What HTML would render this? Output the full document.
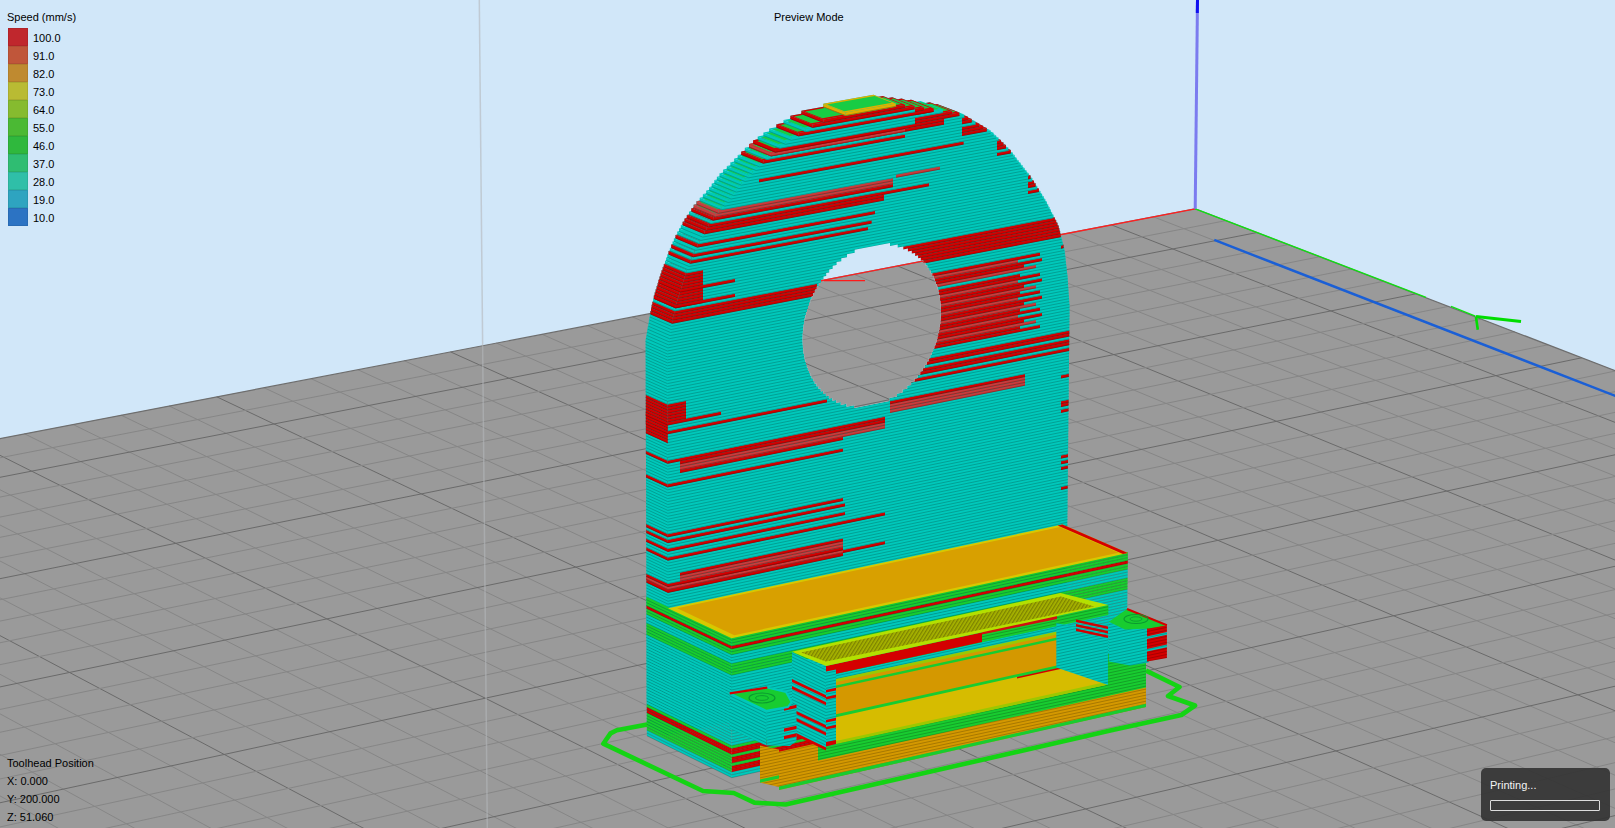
<!DOCTYPE html><html><head><meta charset="utf-8"><style>
html,body{margin:0;padding:0;width:1615px;height:828px;overflow:hidden;background:#d1e7f9}
.t{position:absolute;font-family:"Liberation Sans",sans-serif;font-size:11px;line-height:13px;color:#000;white-space:nowrap}
</style></head><body><svg width="1615" height="828" viewBox="0 0 1615 828" style="position:absolute;left:0;top:0"><defs><pattern id="ph" patternUnits="userSpaceOnUse" width="3.0" height="40" patternTransform="rotate(32)"><rect x="0" y="0" width="1.3" height="40" fill="rgba(70,70,0,0.45)"/></pattern><pattern id="pu" patternUnits="userSpaceOnUse" width="40" height="2.95" patternTransform="rotate(-12.1)"><rect x="0" y="2.0" width="40" height="0.95" fill="rgba(0,0,0,0.22)"/></pattern><pattern id="pv" patternUnits="userSpaceOnUse" width="40" height="2.95" patternTransform="rotate(25.6)"><rect x="0" y="2.0" width="40" height="0.95" fill="rgba(0,0,0,0.22)"/></pattern><clipPath id="hf"><polygon points="854.2,408.1 854.2,405.2 846.5,406.7 846.5,403.8 840.8,404.9 840.8,402.0 836.2,402.9 836.2,400.0 832.3,400.8 832.3,397.9 828.9,398.6 828.9,395.7 825.9,396.3 825.9,393.3 823.2,393.9 823.2,390.9 820.8,391.4 820.8,388.5 818.5,388.9 818.6,386.0 816.5,386.4 816.6,383.5 814.7,383.9 814.7,380.9 813.1,381.3 813.1,378.3 811.6,378.6 811.6,375.7 810.2,376.0 810.2,373.0 809.0,373.3 809.0,370.4 807.9,370.6 807.9,367.6 806.9,367.8 806.9,364.9 806.0,365.1 806.0,362.1 805.2,362.3 805.2,359.4 804.6,359.5 804.6,356.6 804.0,356.7 804.0,353.7 803.5,353.8 803.5,350.9 803.1,351.0 803.2,348.0 802.9,348.1 802.9,345.1 802.7,345.2 802.7,342.2 802.6,342.3 802.6,339.3 802.6,339.3 802.6,336.4 802.7,336.4 802.7,333.4 802.9,333.4 802.9,330.4 803.2,330.4 803.2,327.4 803.6,327.4 803.6,324.4 804.0,324.3 804.0,321.4 804.6,321.3 804.6,318.3 805.3,318.2 805.3,315.3 806.1,315.1 806.1,312.2 807.0,312.0 807.0,309.1 808.0,308.9 808.0,305.9 809.1,305.7 809.1,302.8 810.3,302.5 810.4,299.6 811.7,299.3 811.7,296.4 813.2,296.1 813.3,293.1 814.9,292.8 814.9,289.8 816.8,289.5 816.8,286.5 818.8,286.2 818.8,283.2 821.0,282.8 821.0,279.8 823.5,279.4 823.5,276.4 826.2,275.9 826.2,273.0 829.2,272.4 829.2,269.4 832.7,268.8 832.7,265.8 836.6,265.1 836.6,262.1 841.3,261.2 841.3,258.3 847.0,257.2 847.0,254.3 854.7,252.8 854.7,249.8 890.0,243.1 890.0,246.1 897.7,244.6 897.7,247.5 903.3,246.4 903.3,249.4 907.9,248.5 907.9,251.4 911.8,250.7 911.8,253.6 915.1,253.0 915.1,255.9 918.1,255.3 918.1,258.3 920.8,257.7 920.8,260.7 923.2,260.2 923.2,263.1 925.4,262.7 925.4,265.6 927.3,265.3 927.3,268.2 929.1,267.8 929.1,270.8 930.8,270.4 930.7,273.4 932.2,273.1 932.2,276.0 933.6,275.7 933.5,278.7 934.8,278.4 934.7,281.4 935.8,281.1 935.8,284.1 936.8,283.9 936.8,286.8 937.7,286.6 937.6,289.5 938.4,289.4 938.4,292.3 939.1,292.2 939.0,295.1 939.6,295.0 939.6,297.9 940.0,297.8 940.0,300.7 940.4,300.7 940.4,303.6 940.7,303.5 940.6,306.4 940.8,306.4 940.8,309.3 940.9,309.3 940.9,312.2 940.9,312.2 940.9,315.1 940.8,315.2 940.7,318.1 940.6,318.1 940.5,321.0 940.3,321.1 940.3,324.0 939.9,324.1 939.9,327.0 939.4,327.1 939.4,330.0 938.8,330.1 938.8,333.0 938.1,333.1 938.1,336.0 937.4,336.2 937.3,339.1 936.5,339.3 936.5,342.2 935.5,342.4 935.5,345.3 934.4,345.5 934.3,348.4 933.1,348.7 933.1,351.6 931.8,351.8 931.7,354.7 930.3,355.0 930.2,358.0 928.6,358.3 928.6,361.2 926.8,361.5 926.8,364.5 924.8,364.8 924.8,367.8 922.6,368.2 922.6,371.1 920.2,371.6 920.2,374.5 917.5,375.0 917.5,377.9 914.5,378.5 914.5,381.4 911.1,382.1 911.1,385.0 907.2,385.8 907.2,388.7 902.6,389.6 902.6,392.5 897.0,393.7 897.0,396.6 889.3,398.1 889.3,401.0"/></clipPath><clipPath id="hf0"><polygon points="802.6,339.3 802.8,333.6 803.3,327.8 804.2,322.1 805.4,316.3 807.0,310.6 808.8,305.0 811.0,299.4 813.5,294.1 816.3,288.8 819.4,283.8 822.7,278.9 826.3,274.3 830.1,270.0 834.1,265.9 838.3,262.1 842.7,258.7 847.2,255.6 851.9,252.8 856.6,250.4 861.4,248.4 866.3,246.8 871.2,245.5 876.1,244.7 880.9,244.3 885.7,244.3 890.5,244.6 895.1,245.4 899.7,246.6 904.1,248.2 908.3,250.2 912.3,252.5 916.2,255.2 919.8,258.3 923.2,261.7 926.3,265.4 929.2,269.4 931.7,273.6 934.0,278.2 936.0,282.9 937.6,287.9 938.9,293.1 939.9,298.4 940.6,303.9 940.9,309.4 940.8,315.1 940.4,320.7 939.7,326.5 938.7,332.2 937.3,337.8 935.6,343.4 933.6,349.0 931.3,354.4 928.6,359.6 925.7,364.7 922.6,369.7 919.2,374.3 915.5,378.8 911.7,383.0 907.6,386.9 903.4,390.5 899.0,393.8 894.4,396.7 889.8,399.3 885.0,401.5 880.2,403.4 875.4,404.9 870.5,406.0 865.7,406.6 860.8,406.9 856.1,406.8 851.3,406.3 846.7,405.3 842.3,404.0 837.9,402.3 833.7,400.2 829.8,397.7 826.0,394.9 822.4,391.7 819.1,388.2 816.1,384.3 813.3,380.2 810.9,375.8 808.7,371.2 806.8,366.3 805.3,361.2 804.1,355.9 803.3,350.5 802.8,345.0 802.6,339.3"/></clipPath><clipPath id="hb"><polygon points="780.6,329.9 780.8,324.2 781.3,318.5 782.2,312.8 783.4,307.0 784.9,301.3 786.8,295.7 789.0,290.2 791.5,284.8 794.3,279.6 797.3,274.6 800.6,269.7 804.2,265.1 808.0,260.8 812.0,256.7 816.2,253.0 820.6,249.6 825.1,246.5 829.7,243.7 834.4,241.3 839.3,239.3 844.1,237.7 849.0,236.5 853.9,235.7 858.7,235.2 863.5,235.2 868.3,235.6 872.9,236.4 877.5,237.6 881.8,239.2 886.1,241.1 890.1,243.5 894.0,246.2 897.6,249.2 901.0,252.6 904.1,256.3 906.9,260.3 909.5,264.5 911.8,269.1 913.7,273.8 915.4,278.8 916.7,283.9 917.7,289.2 918.3,294.7 918.6,300.2 918.6,305.8 918.2,311.5 917.5,317.2 916.5,322.9 915.1,328.6 913.4,334.2 911.4,339.7 909.1,345.1 906.5,350.3 903.6,355.4 900.4,360.3 897.0,364.9 893.4,369.4 889.5,373.6 885.5,377.4 881.2,381.0 876.9,384.3 872.3,387.2 867.7,389.8 863.0,392.0 858.2,393.9 853.3,395.4 848.5,396.4 843.6,397.1 838.8,397.4 834.0,397.3 829.3,396.7 824.7,395.8 820.2,394.5 815.9,392.8 811.7,390.7 807.8,388.2 804.0,385.4 800.4,382.2 797.1,378.7 794.1,374.9 791.3,370.7 788.9,366.4 786.7,361.7 784.9,356.8 783.3,351.8 782.1,346.5 781.3,341.1 780.8,335.6 780.6,329.9"/></clipPath></defs><g id="bg"><rect x="0" y="0" width="1615" height="828" fill="#d1e7f9"/><polygon points="-957.9,622.7 1195.2,208.8 2890.3,862.2 466.7,1513.5" fill="#9a9a9a"/><g stroke-width="1"><line x1="1153.43" y1="216.81" x2="2844.86" y2="874.38" stroke="#868686"/><line x1="1111.41" y1="224.89" x2="2799.09" y2="886.68" stroke="#6a6a6a"/><line x1="1069.15" y1="233.02" x2="2753.00" y2="899.07" stroke="#868686"/><line x1="1026.64" y1="241.19" x2="2706.57" y2="911.54" stroke="#868686"/><line x1="983.88" y1="249.41" x2="2659.81" y2="924.11" stroke="#868686"/><line x1="940.87" y1="257.68" x2="2612.71" y2="936.77" stroke="#868686"/><line x1="897.61" y1="265.99" x2="2565.27" y2="949.52" stroke="#6a6a6a"/><line x1="854.09" y1="274.36" x2="2517.48" y2="962.36" stroke="#868686"/><line x1="810.32" y1="282.78" x2="2469.34" y2="975.29" stroke="#868686"/><line x1="766.29" y1="291.24" x2="2420.85" y2="988.32" stroke="#868686"/><line x1="722.00" y1="299.76" x2="2372.01" y2="1001.45" stroke="#868686"/><line x1="677.44" y1="308.32" x2="2322.80" y2="1014.68" stroke="#6a6a6a"/><line x1="632.62" y1="316.94" x2="2273.23" y2="1028.00" stroke="#868686"/><line x1="587.53" y1="325.61" x2="2223.29" y2="1041.42" stroke="#868686"/><line x1="542.17" y1="334.33" x2="2172.98" y2="1054.94" stroke="#868686"/><line x1="496.54" y1="343.10" x2="2122.29" y2="1068.56" stroke="#868686"/><line x1="450.63" y1="351.93" x2="2071.21" y2="1082.29" stroke="#6a6a6a"/><line x1="404.44" y1="360.81" x2="2019.76" y2="1096.11" stroke="#868686"/><line x1="357.97" y1="369.74" x2="1967.91" y2="1110.05" stroke="#868686"/><line x1="311.22" y1="378.73" x2="1915.66" y2="1124.09" stroke="#868686"/><line x1="264.18" y1="387.77" x2="1863.02" y2="1138.24" stroke="#868686"/><line x1="216.85" y1="396.87" x2="1809.98" y2="1152.49" stroke="#6a6a6a"/><line x1="169.24" y1="406.03" x2="1756.52" y2="1166.86" stroke="#868686"/><line x1="121.32" y1="415.24" x2="1702.65" y2="1181.33" stroke="#868686"/><line x1="73.12" y1="424.50" x2="1648.37" y2="1195.92" stroke="#868686"/><line x1="24.61" y1="433.83" x2="1593.66" y2="1210.62" stroke="#868686"/><line x1="-24.20" y1="443.21" x2="1538.52" y2="1225.44" stroke="#6a6a6a"/><line x1="-73.32" y1="452.66" x2="1482.95" y2="1240.37" stroke="#868686"/><line x1="-122.74" y1="462.16" x2="1426.95" y2="1255.42" stroke="#868686"/><line x1="-172.47" y1="471.72" x2="1370.50" y2="1270.60" stroke="#868686"/><line x1="-222.52" y1="481.34" x2="1313.60" y2="1285.89" stroke="#868686"/><line x1="-272.88" y1="491.02" x2="1256.24" y2="1301.30" stroke="#6a6a6a"/><line x1="-323.57" y1="500.77" x2="1198.43" y2="1316.84" stroke="#868686"/><line x1="-374.58" y1="510.57" x2="1140.15" y2="1332.50" stroke="#868686"/><line x1="-425.91" y1="520.44" x2="1081.41" y2="1348.28" stroke="#868686"/><line x1="-477.57" y1="530.37" x2="1022.18" y2="1364.20" stroke="#868686"/><line x1="-529.56" y1="540.37" x2="962.48" y2="1380.25" stroke="#6a6a6a"/><line x1="-581.89" y1="550.43" x2="902.28" y2="1396.42" stroke="#868686"/><line x1="-634.56" y1="560.56" x2="841.59" y2="1412.73" stroke="#868686"/><line x1="-687.57" y1="570.75" x2="780.41" y2="1429.17" stroke="#868686"/><line x1="-740.93" y1="581.01" x2="718.71" y2="1445.75" stroke="#868686"/><line x1="-794.63" y1="591.33" x2="656.51" y2="1462.47" stroke="#6a6a6a"/><line x1="-848.69" y1="601.72" x2="593.78" y2="1479.33" stroke="#868686"/><line x1="-903.10" y1="612.18" x2="530.53" y2="1496.33" stroke="#868686"/><line x1="1225.94" y1="220.62" x2="-932.91" y2="638.32" stroke="#868686"/><line x1="1256.93" y1="232.57" x2="-907.72" y2="654.07" stroke="#6a6a6a"/><line x1="1288.18" y1="244.61" x2="-882.27" y2="669.98" stroke="#868686"/><line x1="1319.70" y1="256.76" x2="-856.58" y2="686.04" stroke="#868686"/><line x1="1351.48" y1="269.01" x2="-830.64" y2="702.26" stroke="#868686"/><line x1="1383.53" y1="281.37" x2="-804.44" y2="718.65" stroke="#868686"/><line x1="1415.86" y1="293.83" x2="-777.98" y2="735.19" stroke="#6a6a6a"/><line x1="1448.47" y1="306.40" x2="-751.26" y2="751.90" stroke="#868686"/><line x1="1481.36" y1="319.08" x2="-724.27" y2="768.77" stroke="#868686"/><line x1="1514.54" y1="331.87" x2="-697.01" y2="785.82" stroke="#868686"/><line x1="1548.01" y1="344.77" x2="-669.48" y2="803.03" stroke="#868686"/><line x1="1581.77" y1="357.78" x2="-641.66" y2="820.43" stroke="#6a6a6a"/><line x1="1615.83" y1="370.91" x2="-613.56" y2="838.00" stroke="#868686"/><line x1="1650.19" y1="384.15" x2="-585.17" y2="855.75" stroke="#868686"/><line x1="1684.86" y1="397.52" x2="-556.49" y2="873.68" stroke="#868686"/><line x1="1719.84" y1="411.00" x2="-527.51" y2="891.80" stroke="#868686"/><line x1="1755.13" y1="424.60" x2="-498.23" y2="910.11" stroke="#6a6a6a"/><line x1="1790.73" y1="438.33" x2="-468.64" y2="928.61" stroke="#868686"/><line x1="1826.66" y1="452.18" x2="-438.74" y2="947.30" stroke="#868686"/><line x1="1862.92" y1="466.15" x2="-408.53" y2="966.19" stroke="#868686"/><line x1="1899.51" y1="480.26" x2="-377.99" y2="985.29" stroke="#868686"/><line x1="1936.44" y1="494.49" x2="-347.13" y2="1004.59" stroke="#6a6a6a"/><line x1="1973.70" y1="508.85" x2="-315.93" y2="1024.09" stroke="#868686"/><line x1="2011.31" y1="523.35" x2="-284.40" y2="1043.81" stroke="#868686"/><line x1="2049.27" y1="537.98" x2="-252.52" y2="1063.74" stroke="#868686"/><line x1="2087.59" y1="552.75" x2="-220.29" y2="1083.89" stroke="#868686"/><line x1="2126.26" y1="567.66" x2="-187.71" y2="1104.26" stroke="#6a6a6a"/><line x1="2165.30" y1="582.71" x2="-154.77" y2="1124.86" stroke="#868686"/><line x1="2204.72" y1="597.90" x2="-121.46" y2="1145.68" stroke="#868686"/><line x1="2244.50" y1="613.24" x2="-87.78" y2="1166.74" stroke="#868686"/><line x1="2284.67" y1="628.72" x2="-53.73" y2="1188.04" stroke="#868686"/><line x1="2325.22" y1="644.35" x2="-19.28" y2="1209.57" stroke="#6a6a6a"/><line x1="2366.17" y1="660.13" x2="15.55" y2="1231.36" stroke="#868686"/><line x1="2407.51" y1="676.07" x2="50.79" y2="1253.39" stroke="#868686"/><line x1="2449.26" y1="692.16" x2="86.43" y2="1275.67" stroke="#868686"/><line x1="2491.42" y1="708.41" x2="122.48" y2="1298.21" stroke="#868686"/><line x1="2533.99" y1="724.82" x2="158.95" y2="1321.01" stroke="#6a6a6a"/><line x1="2576.99" y1="741.39" x2="195.85" y2="1344.09" stroke="#868686"/><line x1="2620.41" y1="758.13" x2="233.18" y2="1367.43" stroke="#868686"/><line x1="2664.27" y1="775.04" x2="270.96" y2="1391.05" stroke="#868686"/><line x1="2708.57" y1="792.11" x2="309.18" y2="1414.95" stroke="#868686"/><line x1="2753.31" y1="809.36" x2="347.86" y2="1439.13" stroke="#6a6a6a"/><line x1="2798.51" y1="826.78" x2="387.01" y2="1463.61" stroke="#868686"/><line x1="2844.18" y1="844.38" x2="426.64" y2="1488.39" stroke="#868686"/></g><line x1="-957.87" y1="622.71" x2="1195.21" y2="208.78" stroke="#6e6e6e" stroke-width="1.2"/><line x1="1195.21" y1="208.78" x2="2890.31" y2="862.17" stroke="#6e6e6e" stroke-width="1.2"/><line x1="677.44" y1="308.32" x2="1195.21" y2="208.78" stroke="#ff2020" stroke-width="1.3"/><polyline points="1195.2,208.8 1426,297.3" fill="none" stroke="#10e010" stroke-width="1.3"/><polyline points="1451,306.4 1475.4,316.2" fill="none" stroke="#10e010" stroke-width="1.3"/><polyline points="1476,316.5 1521,321.6" fill="none" stroke="#00dd00" stroke-width="3"/><polyline points="1476,317 1477.8,329.8" fill="none" stroke="#00dd00" stroke-width="2.6"/><line x1="1214.27" y1="239.97" x2="2201.08" y2="623.54" stroke="#1a5fd6" stroke-width="2.4"/><line x1="824" y1="280.6" x2="865" y2="280.6" stroke="#ff1a1a" stroke-width="1.3"/></g><line x1="479.3" y1="0" x2="487.3" y2="828" stroke="#b4b8bb" stroke-opacity="0.6" stroke-width="1.5"/><line x1="1197.5" y1="0" x2="1195.2" y2="208.8" stroke="#7b7bef" stroke-width="3"/><line x1="1197.5" y1="0" x2="1197.3" y2="13" stroke="#1010f0" stroke-width="3"/><g stroke="none"><g fill="#00c8bb"><polygon points="668.3,734.9 1066.1,647.2 1066.1,644.4 668.3,732.0"/><polygon points="646.8,724.3 668.3,734.9 668.3,732.0 646.8,721.4"/><polygon points="646.8,721.4 1043.9,634.3 1066.1,644.4 668.3,732.0"/></g><polyline fill="none" stroke="#009c90" stroke-width="0.9" points="646.8,724.3 668.3,734.9 1066.1,647.2"/><g fill="#00c8bb"><polygon points="668.3,732.0 1066.1,644.4 1066.1,641.5 668.3,729.1"/><polygon points="646.8,721.4 668.3,732.0 668.3,729.1 646.8,718.5"/><polygon points="646.8,718.5 1043.9,631.5 1066.1,641.5 668.3,729.1"/></g><polyline fill="none" stroke="#009c90" stroke-width="0.9" points="646.8,721.4 668.3,732.0 1066.1,644.4"/><g fill="#00c8bb"><polygon points="668.3,729.1 1066.1,641.5 1066.1,638.7 668.3,726.2"/><polygon points="646.8,718.5 668.3,729.1 668.3,726.2 646.8,715.6"/><polygon points="646.8,715.6 1044.0,628.7 1066.1,638.7 668.3,726.2"/></g><polyline fill="none" stroke="#009c90" stroke-width="0.9" points="646.8,718.5 668.3,729.1 1066.1,641.5"/><g fill="#00c8bb"><polygon points="668.3,726.2 1066.1,638.7 1066.2,635.9 668.3,723.3"/><polygon points="646.8,715.6 668.3,726.2 668.3,723.3 646.8,712.7"/><polygon points="646.8,712.7 1044.0,625.9 1066.2,635.9 668.3,723.3"/></g><polyline fill="none" stroke="#009c90" stroke-width="0.9" points="646.8,715.6 668.3,726.2 1066.1,638.7"/><g fill="#00c8bb"><polygon points="668.3,723.3 1066.2,635.9 1066.2,633.0 668.3,720.4"/><polygon points="646.8,712.7 668.3,723.3 668.3,720.4 646.8,709.9"/><polygon points="646.8,709.9 1044.0,623.0 1066.2,633.0 668.3,720.4"/></g><polyline fill="none" stroke="#009c90" stroke-width="0.9" points="646.8,712.7 668.3,723.3 1066.2,635.9"/><g fill="#00c8bb"><polygon points="668.3,720.4 1066.2,633.0 1066.2,630.2 668.3,717.5"/><polygon points="646.8,709.9 668.3,720.4 668.3,717.5 646.8,707.0"/><polygon points="646.8,707.0 1044.0,620.2 1066.2,630.2 668.3,717.5"/></g><polyline fill="none" stroke="#009c90" stroke-width="0.9" points="646.8,709.9 668.3,720.4 1066.2,633.0"/><g fill="#00c8bb"><polygon points="668.3,717.5 1066.2,630.2 1066.3,627.4 668.3,714.6"/><polygon points="646.8,707.0 668.3,717.5 668.3,714.6 646.8,704.1"/><polygon points="646.8,704.1 1044.1,617.4 1066.3,627.4 668.3,714.6"/></g><polyline fill="none" stroke="#009c90" stroke-width="0.9" points="646.8,707.0 668.3,717.5 1066.2,630.2"/><g fill="#00c8bb"><polygon points="668.3,714.6 1066.3,627.4 1066.3,624.6 668.3,711.7"/><polygon points="646.8,704.1 668.3,714.6 668.3,711.7 646.8,701.2"/><polygon points="646.8,701.2 1044.1,614.6 1066.3,624.6 668.3,711.7"/></g><polyline fill="none" stroke="#009c90" stroke-width="0.9" points="646.8,704.1 668.3,714.6 1066.3,627.4"/><g fill="#00c8bb"><polygon points="668.3,711.7 1066.3,624.6 1066.3,621.7 668.3,708.8"/><polygon points="646.8,701.2 668.3,711.7 668.3,708.8 646.7,698.3"/><polygon points="646.7,698.3 1044.1,611.8 1066.3,621.7 668.3,708.8"/></g><polyline fill="none" stroke="#009c90" stroke-width="0.9" points="646.8,701.2 668.3,711.7 1066.3,624.6"/><g fill="#00c8bb"><polygon points="668.3,708.8 1066.3,621.7 1066.3,618.9 668.3,705.9"/><polygon points="646.7,698.3 668.3,708.8 668.3,705.9 646.7,695.4"/><polygon points="646.7,695.4 1044.2,608.9 1066.3,618.9 668.3,705.9"/></g><polyline fill="none" stroke="#009c90" stroke-width="0.9" points="646.7,698.3 668.3,708.8 1066.3,621.7"/><g fill="#00c8bb"><polygon points="668.3,705.9 1066.3,618.9 1066.4,616.1 668.3,703.0"/><polygon points="646.7,695.4 668.3,705.9 668.3,703.0 646.7,692.5"/><polygon points="646.7,692.5 1044.2,606.1 1066.4,616.1 668.3,703.0"/></g><polyline fill="none" stroke="#009c90" stroke-width="0.9" points="646.7,695.4 668.3,705.9 1066.3,618.9"/><g fill="#00c8bb"><polygon points="668.3,703.0 1066.4,616.1 1066.4,613.2 668.3,700.1"/><polygon points="646.7,692.5 668.3,703.0 668.3,700.1 646.7,689.6"/><polygon points="646.7,689.6 1044.2,603.3 1066.4,613.2 668.3,700.1"/></g><polyline fill="none" stroke="#009c90" stroke-width="0.9" points="646.7,692.5 668.3,703.0 1066.4,616.1"/><g fill="#00c8bb"><polygon points="668.3,700.1 1066.4,613.2 1066.4,610.4 668.2,697.2"/><polygon points="646.7,689.6 668.3,700.1 668.2,697.2 646.7,686.7"/><polygon points="646.7,686.7 1044.2,600.5 1066.4,610.4 668.2,697.2"/></g><polyline fill="none" stroke="#009c90" stroke-width="0.9" points="646.7,689.6 668.3,700.1 1066.4,613.2"/><g fill="#00c8bb"><polygon points="668.2,697.2 1066.4,610.4 1066.5,607.6 668.2,694.3"/><polygon points="646.7,686.7 668.2,697.2 668.2,694.3 646.7,683.8"/><polygon points="646.7,683.8 1044.3,597.6 1066.5,607.6 668.2,694.3"/></g><polyline fill="none" stroke="#009c90" stroke-width="0.9" points="646.7,686.7 668.2,697.2 1066.4,610.4"/><g fill="#00c8bb"><polygon points="668.2,694.3 1066.5,607.6 1066.5,604.7 668.2,691.4"/><polygon points="646.7,683.8 668.2,694.3 668.2,691.4 646.7,680.9"/><polygon points="646.7,680.9 1044.3,594.8 1066.5,604.7 668.2,691.4"/></g><polyline fill="none" stroke="#009c90" stroke-width="0.9" points="646.7,683.8 668.2,694.3 1066.5,607.6"/><g fill="#00c8bb"><polygon points="668.2,691.4 1066.5,604.7 1066.5,601.9 668.2,688.5"/><polygon points="646.7,680.9 668.2,691.4 668.2,688.5 646.7,678.0"/><polygon points="646.7,678.0 1044.3,592.0 1066.5,601.9 668.2,688.5"/></g><polyline fill="none" stroke="#009c90" stroke-width="0.9" points="646.7,680.9 668.2,691.4 1066.5,604.7"/><g fill="#00c8bb"><polygon points="668.2,688.5 1066.5,601.9 1066.5,599.1 668.2,685.6"/><polygon points="646.7,678.0 668.2,688.5 668.2,685.6 646.7,675.1"/><polygon points="646.7,675.1 1044.3,589.2 1066.5,599.1 668.2,685.6"/></g><polyline fill="none" stroke="#009c90" stroke-width="0.9" points="646.7,678.0 668.2,688.5 1066.5,601.9"/><g fill="#00c8bb"><polygon points="668.2,685.6 1066.5,599.1 1066.6,596.2 668.2,682.7"/><polygon points="646.7,675.1 668.2,685.6 668.2,682.7 646.7,672.2"/><polygon points="646.7,672.2 1044.4,586.3 1066.6,596.2 668.2,682.7"/></g><polyline fill="none" stroke="#009c90" stroke-width="0.9" points="646.7,675.1 668.2,685.6 1066.5,599.1"/><g fill="#00c8bb"><polygon points="668.2,682.7 1066.6,596.2 1066.6,593.4 668.2,679.8"/><polygon points="646.7,672.2 668.2,682.7 668.2,679.8 646.7,669.4"/><polygon points="646.7,669.4 1044.4,583.5 1066.6,593.4 668.2,679.8"/></g><polyline fill="none" stroke="#009c90" stroke-width="0.9" points="646.7,672.2 668.2,682.7 1066.6,596.2"/><g fill="#00c8bb"><polygon points="668.2,679.8 1066.6,593.4 1066.6,590.6 668.2,676.9"/><polygon points="646.7,669.4 668.2,679.8 668.2,676.9 646.6,666.5"/><polygon points="646.6,666.5 1044.4,580.7 1066.6,590.6 668.2,676.9"/></g><polyline fill="none" stroke="#009c90" stroke-width="0.9" points="646.7,669.4 668.2,679.8 1066.6,593.4"/><g fill="#00c8bb"><polygon points="668.2,676.9 1066.6,590.6 1066.7,587.7 668.2,674.0"/><polygon points="646.6,666.5 668.2,676.9 668.2,674.0 646.6,663.6"/><polygon points="646.6,663.6 1044.4,577.8 1066.7,587.7 668.2,674.0"/></g><polyline fill="none" stroke="#009c90" stroke-width="0.9" points="646.6,666.5 668.2,676.9 1066.6,590.6"/><g fill="#00c8bb"><polygon points="668.2,674.0 1066.7,587.7 1066.7,584.9 668.2,671.1"/><polygon points="646.6,663.6 668.2,674.0 668.2,671.1 646.6,660.7"/><polygon points="646.6,660.7 1044.5,575.0 1066.7,584.9 668.2,671.1"/></g><polyline fill="none" stroke="#009c90" stroke-width="0.9" points="646.6,663.6 668.2,674.0 1066.7,587.7"/><g fill="#00c8bb"><polygon points="668.2,671.1 1066.7,584.9 1066.7,582.1 668.2,668.2"/><polygon points="646.6,660.7 668.2,671.1 668.2,668.2 646.6,657.8"/><polygon points="646.6,657.8 1044.5,572.2 1066.7,582.1 668.2,668.2"/></g><polyline fill="none" stroke="#009c90" stroke-width="0.9" points="646.6,660.7 668.2,671.1 1066.7,584.9"/><g fill="#00c8bb"><polygon points="668.2,668.2 1066.7,582.1 1066.8,579.2 668.2,665.3"/><polygon points="646.6,657.8 668.2,668.2 668.2,665.3 646.6,654.9"/><polygon points="646.6,654.9 1044.5,569.4 1066.8,579.2 668.2,665.3"/></g><polyline fill="none" stroke="#009c90" stroke-width="0.9" points="646.6,657.8 668.2,668.2 1066.7,582.1"/><g fill="#00c8bb"><polygon points="668.2,665.3 1066.8,579.2 1066.8,576.4 668.2,662.4"/><polygon points="646.6,654.9 668.2,665.3 668.2,662.4 646.6,652.0"/><polygon points="646.6,652.0 1044.6,566.5 1066.8,576.4 668.2,662.4"/></g><polyline fill="none" stroke="#009c90" stroke-width="0.9" points="646.6,654.9 668.2,665.3 1066.8,579.2"/><g fill="#00c8bb"><polygon points="668.2,662.4 1066.8,576.4 1066.8,573.5 668.2,659.4"/><polygon points="646.6,652.0 668.2,662.4 668.2,659.4 646.6,649.1"/><polygon points="646.6,649.1 1044.6,563.7 1066.8,573.5 668.2,659.4"/></g><polyline fill="none" stroke="#009c90" stroke-width="0.9" points="646.6,652.0 668.2,662.4 1066.8,576.4"/><g fill="#00c8bb"><polygon points="668.2,659.4 1066.8,573.5 1066.8,570.7 668.1,656.5"/><polygon points="646.6,649.1 668.2,659.4 668.1,656.5 646.6,646.2"/><polygon points="646.6,646.2 1044.6,560.9 1066.8,570.7 668.1,656.5"/></g><polyline fill="none" stroke="#009c90" stroke-width="0.9" points="646.6,649.1 668.2,659.4 1066.8,573.5"/><g fill="#00c8bb"><polygon points="668.1,656.5 1066.8,570.7 1066.9,567.9 668.1,653.6"/><polygon points="646.6,646.2 668.1,656.5 668.1,653.6 646.6,643.3"/><polygon points="646.6,643.3 1044.6,558.0 1066.9,567.9 668.1,653.6"/></g><polyline fill="none" stroke="#009c90" stroke-width="0.9" points="646.6,646.2 668.1,656.5 1066.8,570.7"/><g fill="#00c8bb"><polygon points="668.1,653.6 1066.9,567.9 1066.9,565.0 668.1,650.7"/><polygon points="646.6,643.3 668.1,653.6 668.1,650.7 646.6,640.4"/><polygon points="646.6,640.4 1044.7,555.2 1066.9,565.0 668.1,650.7"/></g><polyline fill="none" stroke="#009c90" stroke-width="0.9" points="646.6,643.3 668.1,653.6 1066.9,567.9"/><g fill="#00c8bb"><polygon points="668.1,650.7 1066.9,565.0 1066.9,562.2 668.1,647.8"/><polygon points="646.6,640.4 668.1,650.7 668.1,647.8 646.5,637.5"/><polygon points="646.5,637.5 1044.7,552.4 1066.9,562.2 668.1,647.8"/></g><polyline fill="none" stroke="#009c90" stroke-width="0.9" points="646.6,640.4 668.1,650.7 1066.9,565.0"/><g fill="#00c8bb"><polygon points="668.1,647.8 1066.9,562.2 1067.0,559.3 668.1,644.9"/><polygon points="646.5,637.5 668.1,647.8 668.1,644.9 646.5,634.6"/><polygon points="646.5,634.6 1044.7,549.5 1067.0,559.3 668.1,644.9"/></g><polyline fill="none" stroke="#009c90" stroke-width="0.9" points="646.5,637.5 668.1,647.8 1066.9,562.2"/><g fill="#00c8bb"><polygon points="668.1,644.9 1067.0,559.3 1067.0,556.5 668.1,642.0"/><polygon points="646.5,634.6 668.1,644.9 668.1,642.0 646.5,631.6"/><polygon points="646.5,631.6 1044.7,546.7 1067.0,556.5 668.1,642.0"/></g><polyline fill="none" stroke="#009c90" stroke-width="0.9" points="646.5,634.6 668.1,644.9 1067.0,559.3"/><g fill="#00c8bb"><polygon points="668.1,642.0 1067.0,556.5 1067.0,553.6 668.1,639.1"/><polygon points="646.5,631.6 668.1,642.0 668.1,639.1 646.5,628.7"/><polygon points="646.5,628.7 1044.8,543.9 1067.0,553.6 668.1,639.1"/></g><polyline fill="none" stroke="#009c90" stroke-width="0.9" points="646.5,631.6 668.1,642.0 1067.0,556.5"/><g fill="#00c8bb"><polygon points="668.1,639.1 1067.0,553.6 1067.0,550.8 668.1,636.2"/><polygon points="646.5,628.7 668.1,639.1 668.1,636.2 646.5,625.8"/><polygon points="646.5,625.8 1044.8,541.0 1067.0,550.8 668.1,636.2"/></g><polyline fill="none" stroke="#009c90" stroke-width="0.9" points="646.5,628.7 668.1,639.1 1067.0,553.6"/><g fill="#00c8bb"><polygon points="668.1,636.2 1067.0,550.8 1067.1,548.0 668.1,633.2"/><polygon points="646.5,625.8 668.1,636.2 668.1,633.2 646.5,622.9"/><polygon points="646.5,622.9 1044.8,538.2 1067.1,548.0 668.1,633.2"/></g><polyline fill="none" stroke="#009c90" stroke-width="0.9" points="646.5,625.8 668.1,636.2 1067.0,550.8"/><g fill="#00c8bb"><polygon points="668.1,633.2 1067.1,548.0 1067.1,545.1 668.1,630.3"/><polygon points="646.5,622.9 668.1,633.2 668.1,630.3 646.5,620.0"/><polygon points="646.5,620.0 1044.9,535.3 1067.1,545.1 668.1,630.3"/></g><polyline fill="none" stroke="#009c90" stroke-width="0.9" points="646.5,622.9 668.1,633.2 1067.1,548.0"/><g fill="#00c8bb"><polygon points="668.1,630.3 1067.1,545.1 1067.1,542.3 668.1,627.4"/><polygon points="646.5,620.0 668.1,630.3 668.1,627.4 646.5,617.1"/><polygon points="646.5,617.1 1044.9,532.5 1067.1,542.3 668.1,627.4"/></g><polyline fill="none" stroke="#009c90" stroke-width="0.9" points="646.5,620.0 668.1,630.3 1067.1,545.1"/><g fill="#00c8bb"><polygon points="668.1,627.4 1067.1,542.3 1067.2,539.4 668.1,624.5"/><polygon points="646.5,617.1 668.1,627.4 668.1,624.5 646.5,614.2"/><polygon points="646.5,614.2 1044.9,529.7 1067.2,539.4 668.1,624.5"/></g><polyline fill="none" stroke="#009c90" stroke-width="0.9" points="646.5,617.1 668.1,627.4 1067.1,542.3"/><g fill="#00c8bb"><polygon points="668.1,624.5 1067.2,539.4 1067.2,536.6 668.1,621.6"/><polygon points="646.5,614.2 668.1,624.5 668.1,621.6 646.5,611.3"/><polygon points="646.5,611.3 1044.9,526.8 1067.2,536.6 668.1,621.6"/></g><polyline fill="none" stroke="#009c90" stroke-width="0.9" points="646.5,614.2 668.1,624.5 1067.2,539.4"/><g fill="#00c8bb"><polygon points="668.1,621.6 1067.2,536.6 1067.2,533.7 668.0,618.7"/><polygon points="646.5,611.3 668.1,621.6 668.0,618.7 646.5,608.4"/><polygon points="646.5,608.4 1045.0,524.0 1067.2,533.7 668.0,618.7"/></g><polyline fill="none" stroke="#009c90" stroke-width="0.9" points="646.5,611.3 668.1,621.6 1067.2,536.6"/><g fill="#00c8bb"><polygon points="668.0,618.7 1067.2,533.7 1067.2,530.9 668.0,615.8"/><polygon points="646.5,608.4 668.0,618.7 668.0,615.8 646.4,605.5"/><polygon points="646.4,605.5 1045.0,521.2 1067.2,530.9 668.0,615.8"/></g><polyline fill="none" stroke="#009c90" stroke-width="0.9" points="646.5,608.4 668.0,618.7 1067.2,533.7"/><g fill="#00c8bb"><polygon points="668.0,615.8 1067.2,530.9 1067.3,528.0 668.0,612.8"/><polygon points="646.4,605.5 668.0,615.8 668.0,612.8 646.4,602.6"/><polygon points="646.4,602.6 1045.0,518.3 1067.3,528.0 668.0,612.8"/></g><polyline fill="none" stroke="#009c90" stroke-width="0.9" points="646.4,605.5 668.0,615.8 1067.2,530.9"/><g fill="#00c8bb"><polygon points="668.0,612.8 1067.3,528.0 1067.3,525.2 668.0,609.9"/><polygon points="646.4,602.6 668.0,612.8 668.0,609.9 646.4,599.7"/><polygon points="646.4,599.7 1045.0,515.5 1067.3,525.2 668.0,609.9"/></g><polyline fill="none" stroke="#009c90" stroke-width="0.9" points="646.4,602.6 668.0,612.8 1067.3,528.0"/><g fill="#00c8bb"><polygon points="668.0,609.9 1067.3,525.2 1067.3,522.3 668.0,607.0"/><polygon points="646.4,599.7 668.0,609.9 668.0,607.0 646.4,596.8"/><polygon points="646.4,596.8 1045.1,512.6 1067.3,522.3 668.0,607.0"/></g><polyline fill="none" stroke="#009c90" stroke-width="0.9" points="646.4,599.7 668.0,609.9 1067.3,525.2"/><g fill="#00c8bb"><polygon points="668.0,607.0 1067.3,522.3 1067.4,519.5 668.0,604.1"/><polygon points="646.4,596.8 668.0,607.0 668.0,604.1 646.4,593.9"/><polygon points="646.4,593.9 1045.1,509.8 1067.4,519.5 668.0,604.1"/></g><polyline fill="none" stroke="#009c90" stroke-width="0.9" points="646.4,596.8 668.0,607.0 1067.3,522.3"/><g fill="#00c8bb"><polygon points="668.0,604.1 1067.4,519.5 1067.4,516.6 668.0,601.2"/><polygon points="646.4,593.9 668.0,604.1 668.0,601.2 646.4,590.9"/><polygon points="646.4,590.9 1045.1,507.0 1067.4,516.6 668.0,601.2"/></g><polyline fill="none" stroke="#009c90" stroke-width="0.9" points="646.4,593.9 668.0,604.1 1067.4,519.5"/><g fill="#00c8bb"><polygon points="668.0,601.2 1067.4,516.6 1067.4,513.8 668.0,598.2"/><polygon points="646.4,590.9 668.0,601.2 668.0,598.2 646.4,588.0"/><polygon points="646.4,588.0 1045.2,504.1 1067.4,513.8 668.0,598.2"/></g><polyline fill="none" stroke="#009c90" stroke-width="0.9" points="646.4,590.9 668.0,601.2 1067.4,516.6"/><g fill="#00c8bb"><polygon points="668.0,598.2 1067.4,513.8 1067.5,510.9 668.0,595.3"/><polygon points="646.4,588.0 668.0,598.2 668.0,595.3 646.4,585.1"/><polygon points="646.4,585.1 1045.2,501.3 1067.5,510.9 668.0,595.3"/></g><polyline fill="none" stroke="#009c90" stroke-width="0.9" points="646.4,588.0 668.0,598.2 1067.4,513.8"/><g fill="#00c8bb"><polygon points="668.0,595.3 1067.5,510.9 1067.5,508.1 668.0,592.4"/><polygon points="646.4,585.1 668.0,595.3 668.0,592.4 646.4,582.2"/><polygon points="646.4,582.2 1045.2,498.4 1067.5,508.1 668.0,592.4"/></g><polyline fill="none" stroke="#009c90" stroke-width="0.9" points="646.4,585.1 668.0,595.3 1067.5,510.9"/><g fill="#00c8bb"><polygon points="668.0,592.4 1067.5,508.1 1067.5,505.2 668.0,589.5"/><polygon points="646.4,582.2 668.0,592.4 668.0,589.5 646.4,579.3"/><polygon points="646.4,579.3 1045.2,495.6 1067.5,505.2 668.0,589.5"/></g><polyline fill="none" stroke="#009c90" stroke-width="0.9" points="646.4,582.2 668.0,592.4 1067.5,508.1"/><g fill="#d40000"><polygon points="668.0,592.4 843.0,555.5 843.0,552.6 668.0,589.5"/><polygon points="646.4,582.2 668.0,592.4 668.0,589.5 646.4,579.3"/><polygon points="646.4,579.3 821.1,542.6 843.0,552.6 668.0,589.5"/></g><polyline fill="none" stroke="#a00000" stroke-width="0.9" points="646.4,582.2 668.0,592.4 843.0,555.5"/><g fill="#00c8bb"><polygon points="668.0,589.5 1067.5,505.2 1067.5,502.4 668.0,586.6"/><polygon points="646.4,579.3 668.0,589.5 668.0,586.6 646.3,576.4"/><polygon points="646.3,576.4 1045.3,492.7 1067.5,502.4 668.0,586.6"/></g><polyline fill="none" stroke="#009c90" stroke-width="0.9" points="646.4,579.3 668.0,589.5 1067.5,505.2"/><g fill="#d40000"><polygon points="668.0,589.5 885.0,543.7 885.0,540.8 668.0,586.6"/><polygon points="646.4,579.3 668.0,589.5 668.0,586.6 646.3,576.4"/><polygon points="646.3,576.4 863.0,530.9 885.0,540.8 668.0,586.6"/></g><polyline fill="none" stroke="#a00000" stroke-width="0.9" points="646.4,579.3 668.0,589.5 885.0,543.7"/><g fill="#c83c3c"><polygon points="668.0,589.5 843.0,552.6 843.0,549.7 668.0,586.6"/><polygon points="646.4,579.3 668.0,589.5 668.0,586.6 646.3,576.4"/><polygon points="646.3,576.4 821.1,539.7 843.0,549.7 668.0,586.6"/></g><polyline fill="none" stroke="#a02020" stroke-width="0.9" points="646.4,579.3 668.0,589.5 843.0,552.6"/><g fill="#00c8bb"><polygon points="668.0,586.6 1067.5,502.4 1067.6,499.5 668.0,583.6"/><polygon points="646.3,576.4 668.0,586.6 668.0,583.6 646.3,573.5"/><polygon points="646.3,573.5 1045.3,489.9 1067.6,499.5 668.0,583.6"/></g><polyline fill="none" stroke="#009c90" stroke-width="0.9" points="646.3,576.4 668.0,586.6 1067.5,502.4"/><g fill="#d40000"><polygon points="680.0,584.0 843.0,549.7 843.0,546.8 680.0,581.1"/><polygon points="658.4,570.9 821.1,536.9 843.0,546.8 680.0,581.1"/></g><polyline fill="none" stroke="#a00000" stroke-width="0.9" points="680.0,584.0 843.0,549.7"/><g fill="#d40000"><polygon points="668.0,586.6 843.0,549.7 843.0,546.8 668.0,583.6"/><polygon points="646.3,576.4 668.0,586.6 668.0,583.6 646.3,573.5"/><polygon points="646.3,573.5 821.1,536.9 843.0,546.8 668.0,583.6"/></g><polyline fill="none" stroke="#a00000" stroke-width="0.9" points="646.3,576.4 668.0,586.6 843.0,549.7"/><g fill="#00c8bb"><polygon points="668.0,583.6 1067.6,499.5 1067.6,496.7 667.9,580.7"/><polygon points="646.3,573.5 668.0,583.6 667.9,580.7 646.3,570.5"/><polygon points="646.3,570.5 1045.3,487.0 1067.6,496.7 667.9,580.7"/></g><polyline fill="none" stroke="#009c90" stroke-width="0.9" points="646.3,573.5 668.0,583.6 1067.6,499.5"/><g fill="#c83c3c"><polygon points="680.0,581.1 843.0,546.8 843.0,543.9 680.0,578.2"/><polygon points="658.4,568.0 821.1,534.0 843.0,543.9 680.0,578.2"/></g><polyline fill="none" stroke="#a02020" stroke-width="0.9" points="680.0,581.1 843.0,546.8"/><g fill="#00c8bb"><polygon points="667.9,580.7 1067.6,496.7 1067.6,493.8 667.9,577.8"/><polygon points="646.3,570.5 667.9,580.7 667.9,577.8 646.3,567.6"/><polygon points="646.3,567.6 1045.3,484.2 1067.6,493.8 667.9,577.8"/></g><polyline fill="none" stroke="#009c90" stroke-width="0.9" points="646.3,570.5 667.9,580.7 1067.6,496.7"/><g fill="#c83c3c"><polygon points="680.0,578.2 843.0,543.9 843.0,541.0 680.0,575.3"/><polygon points="658.4,565.1 821.1,531.1 843.0,541.0 680.0,575.3"/></g><polyline fill="none" stroke="#a02020" stroke-width="0.9" points="680.0,578.2 843.0,543.9"/><g fill="#00c8bb"><polygon points="667.9,577.8 1067.6,493.8 1067.7,491.0 667.9,574.9"/><polygon points="646.3,567.6 667.9,577.8 667.9,574.9 646.3,564.7"/><polygon points="646.3,564.7 1045.4,481.4 1067.7,491.0 667.9,574.9"/></g><polyline fill="none" stroke="#009c90" stroke-width="0.9" points="646.3,567.6 667.9,577.8 1067.6,493.8"/><g fill="#d40000"><polygon points="680.0,575.3 843.0,541.0 843.0,538.1 680.0,572.3"/><polygon points="658.4,562.2 821.1,528.2 843.0,538.1 680.0,572.3"/></g><polyline fill="none" stroke="#a00000" stroke-width="0.9" points="680.0,575.3 843.0,541.0"/><g fill="#00c8bb"><polygon points="667.9,574.9 1067.7,491.0 1067.7,488.1 667.9,571.9"/><polygon points="646.3,564.7 667.9,574.9 667.9,571.9 646.3,561.8"/><polygon points="646.3,561.8 1045.4,478.5 1067.7,488.1 667.9,571.9"/></g><polyline fill="none" stroke="#009c90" stroke-width="0.9" points="646.3,564.7 667.9,574.9 1067.7,491.0"/><g fill="#00c8bb"><polygon points="667.9,571.9 1067.7,488.1 1067.7,485.3 667.9,569.0"/><polygon points="646.3,561.8 667.9,571.9 667.9,569.0 646.3,558.9"/><polygon points="646.3,558.9 1045.4,475.7 1067.7,485.3 667.9,569.0"/></g><polyline fill="none" stroke="#009c90" stroke-width="0.9" points="646.3,561.8 667.9,571.9 1067.7,488.1"/><g fill="#d40000"><polygon points="1061.0,489.5 1067.7,488.1 1067.7,485.3 1061.0,486.7"/><polygon points="1038.7,477.1 1045.4,475.7 1067.7,485.3 1061.0,486.7"/></g><polyline fill="none" stroke="#a00000" stroke-width="0.9" points="1061.0,489.5 1067.7,488.1"/><g fill="#00c8bb"><polygon points="667.9,569.0 1067.7,485.3 1067.7,482.4 667.9,566.1"/><polygon points="646.3,558.9 667.9,569.0 667.9,566.1 646.3,556.0"/><polygon points="646.3,556.0 1045.5,472.8 1067.7,482.4 667.9,566.1"/></g><polyline fill="none" stroke="#009c90" stroke-width="0.9" points="646.3,558.9 667.9,569.0 1067.7,485.3"/><g fill="#00c8bb"><polygon points="667.9,566.1 1067.7,482.4 1067.8,479.5 667.9,563.2"/><polygon points="646.3,556.0 667.9,566.1 667.9,563.2 646.3,553.0"/><polygon points="646.3,553.0 1045.5,470.0 1067.8,479.5 667.9,563.2"/></g><polyline fill="none" stroke="#009c90" stroke-width="0.9" points="646.3,556.0 667.9,566.1 1067.7,482.4"/><g fill="#00c8bb"><polygon points="667.9,563.2 1067.8,479.5 1067.8,476.7 667.9,560.2"/><polygon points="646.3,553.0 667.9,563.2 667.9,560.2 646.3,550.1"/><polygon points="646.3,550.1 1045.5,467.1 1067.8,476.7 667.9,560.2"/></g><polyline fill="none" stroke="#009c90" stroke-width="0.9" points="646.3,553.0 667.9,563.2 1067.8,479.5"/><g fill="#00c8bb"><polygon points="667.9,560.2 1067.8,476.7 1067.8,473.8 667.9,557.3"/><polygon points="646.3,550.1 667.9,560.2 667.9,557.3 646.3,547.2"/><polygon points="646.3,547.2 1045.5,464.3 1067.8,473.8 667.9,557.3"/></g><polyline fill="none" stroke="#009c90" stroke-width="0.9" points="646.3,550.1 667.9,560.2 1067.8,476.7"/><g fill="#d40000"><polygon points="667.9,560.2 885.0,514.9 885.0,512.0 667.9,557.3"/><polygon points="646.3,550.1 667.9,560.2 667.9,557.3 646.3,547.2"/><polygon points="646.3,547.2 863.0,502.2 885.0,512.0 667.9,557.3"/></g><polyline fill="none" stroke="#a00000" stroke-width="0.9" points="646.3,550.1 667.9,560.2 885.0,514.9"/><g fill="#00c8bb"><polygon points="667.9,557.3 1067.8,473.8 1067.9,471.0 667.9,554.4"/><polygon points="646.3,547.2 667.9,557.3 667.9,554.4 646.2,544.3"/><polygon points="646.2,544.3 1045.6,461.4 1067.9,471.0 667.9,554.4"/></g><polyline fill="none" stroke="#009c90" stroke-width="0.9" points="646.3,547.2 667.9,557.3 1067.8,473.8"/><g fill="#00c8bb"><polygon points="667.9,554.4 1067.9,471.0 1067.9,468.1 667.9,551.4"/><polygon points="646.2,544.3 667.9,554.4 667.9,551.4 646.2,541.4"/><polygon points="646.2,541.4 1045.6,458.6 1067.9,468.1 667.9,551.4"/></g><polyline fill="none" stroke="#009c90" stroke-width="0.9" points="646.2,544.3 667.9,554.4 1067.9,471.0"/><g fill="#00c8bb"><polygon points="667.9,551.4 1067.9,468.1 1067.9,465.3 667.9,548.5"/><polygon points="646.2,541.4 667.9,551.4 667.9,548.5 646.2,538.4"/><polygon points="646.2,538.4 1045.6,455.7 1067.9,465.3 667.9,548.5"/></g><polyline fill="none" stroke="#009c90" stroke-width="0.9" points="646.2,541.4 667.9,551.4 1067.9,468.1"/><g fill="#d40000"><polygon points="667.9,551.4 845.0,514.5 845.0,511.7 667.9,548.5"/><polygon points="646.2,541.4 667.9,551.4 667.9,548.5 646.2,538.4"/><polygon points="646.2,538.4 823.1,501.8 845.0,511.7 667.9,548.5"/></g><polyline fill="none" stroke="#a00000" stroke-width="0.9" points="646.2,541.4 667.9,551.4 845.0,514.5"/><g fill="#d40000"><polygon points="1061.0,469.6 1067.9,468.1 1067.9,465.3 1061.0,466.7"/><polygon points="1038.7,457.1 1045.6,455.7 1067.9,465.3 1061.0,466.7"/></g><polyline fill="none" stroke="#a00000" stroke-width="0.9" points="1061.0,469.6 1067.9,468.1"/><g fill="#00c8bb"><polygon points="667.9,548.5 1067.9,465.3 1068.0,462.4 667.9,545.6"/><polygon points="646.2,538.4 667.9,548.5 667.9,545.6 646.2,535.5"/><polygon points="646.2,535.5 1045.6,452.9 1068.0,462.4 667.9,545.6"/></g><polyline fill="none" stroke="#009c90" stroke-width="0.9" points="646.2,538.4 667.9,548.5 1067.9,465.3"/><g fill="#00c8bb"><polygon points="667.9,545.6 1068.0,462.4 1068.0,459.5 667.9,542.7"/><polygon points="646.2,535.5 667.9,545.6 667.9,542.7 646.2,532.6"/><polygon points="646.2,532.6 1045.7,450.0 1068.0,459.5 667.9,542.7"/></g><polyline fill="none" stroke="#009c90" stroke-width="0.9" points="646.2,535.5 667.9,545.6 1068.0,462.4"/><g fill="#d40000"><polygon points="1061.0,463.8 1068.0,462.4 1068.0,459.5 1061.0,461.0"/><polygon points="1038.7,451.5 1045.7,450.0 1068.0,459.5 1061.0,461.0"/></g><polyline fill="none" stroke="#a00000" stroke-width="0.9" points="1061.0,463.8 1068.0,462.4"/><g fill="#00c8bb"><polygon points="667.9,542.7 1068.0,459.5 1068.0,456.7 667.8,539.7"/><polygon points="646.2,532.6 667.9,542.7 667.8,539.7 646.2,529.7"/><polygon points="646.2,529.7 1045.7,447.2 1068.0,456.7 667.8,539.7"/></g><polyline fill="none" stroke="#009c90" stroke-width="0.9" points="646.2,532.6 667.9,542.7 1068.0,459.5"/><g fill="#d40000"><polygon points="667.9,542.7 845.0,505.9 845.0,503.0 667.8,539.7"/><polygon points="646.2,532.6 667.9,542.7 667.8,539.7 646.2,529.7"/><polygon points="646.2,529.7 823.1,493.2 845.0,503.0 667.8,539.7"/></g><polyline fill="none" stroke="#a00000" stroke-width="0.9" points="646.2,532.6 667.9,542.7 845.0,505.9"/><g fill="#00c8bb"><polygon points="667.8,539.7 1068.0,456.7 1068.0,453.8 667.8,536.8"/><polygon points="646.2,529.7 667.8,539.7 667.8,536.8 646.2,526.8"/><polygon points="646.2,526.8 1045.7,444.3 1068.0,453.8 667.8,536.8"/></g><polyline fill="none" stroke="#009c90" stroke-width="0.9" points="646.2,529.7 667.8,539.7 1068.0,456.7"/><g fill="#d40000"><polygon points="1061.0,458.1 1068.0,456.7 1068.0,453.8 1061.0,455.3"/><polygon points="1038.7,445.8 1045.7,444.3 1068.0,453.8 1061.0,455.3"/></g><polyline fill="none" stroke="#a00000" stroke-width="0.9" points="1061.0,458.1 1068.0,456.7"/><g fill="#00c8bb"><polygon points="667.8,536.8 1068.0,453.8 1068.1,451.0 667.8,533.9"/><polygon points="646.2,526.8 667.8,536.8 667.8,533.9 646.2,523.8"/><polygon points="646.2,523.8 1045.8,441.5 1068.1,451.0 667.8,533.9"/></g><polyline fill="none" stroke="#009c90" stroke-width="0.9" points="646.2,526.8 667.8,536.8 1068.0,453.8"/><g fill="#d40000"><polygon points="667.8,536.8 843.0,500.5 843.0,497.6 667.8,533.9"/><polygon points="646.2,526.8 667.8,536.8 667.8,533.9 646.2,523.8"/><polygon points="646.2,523.8 821.1,487.8 843.0,497.6 667.8,533.9"/></g><polyline fill="none" stroke="#a00000" stroke-width="0.9" points="646.2,526.8 667.8,536.8 843.0,500.5"/><g fill="#00c8bb"><polygon points="667.8,533.9 1068.1,451.0 1068.1,448.1 667.8,530.9"/><polygon points="646.2,523.8 667.8,533.9 667.8,530.9 646.2,520.9"/><polygon points="646.2,520.9 1045.8,438.6 1068.1,448.1 667.8,530.9"/></g><polyline fill="none" stroke="#009c90" stroke-width="0.9" points="646.2,523.8 667.8,533.9 1068.1,451.0"/><g fill="#00c8bb"><polygon points="667.8,530.9 1068.1,448.1 1068.1,445.2 667.8,528.0"/><polygon points="646.2,520.9 667.8,530.9 667.8,528.0 646.2,518.0"/><polygon points="646.2,518.0 1045.8,435.7 1068.1,445.2 667.8,528.0"/></g><polyline fill="none" stroke="#009c90" stroke-width="0.9" points="646.2,520.9 667.8,530.9 1068.1,448.1"/><g fill="#00c8bb"><polygon points="667.8,528.0 1068.1,445.2 1068.2,442.4 667.8,525.1"/><polygon points="646.2,518.0 667.8,528.0 667.8,525.1 646.1,515.1"/><polygon points="646.1,515.1 1045.8,432.9 1068.2,442.4 667.8,525.1"/></g><polyline fill="none" stroke="#009c90" stroke-width="0.9" points="646.2,518.0 667.8,528.0 1068.1,445.2"/><g fill="#00c8bb"><polygon points="667.8,525.1 1068.2,442.4 1068.2,439.5 667.8,522.1"/><polygon points="646.1,515.1 667.8,525.1 667.8,522.1 646.1,512.1"/><polygon points="646.1,512.1 1045.9,430.0 1068.2,439.5 667.8,522.1"/></g><polyline fill="none" stroke="#009c90" stroke-width="0.9" points="646.1,515.1 667.8,525.1 1068.2,442.4"/><g fill="#00c8bb"><polygon points="667.8,522.1 1068.2,439.5 1068.2,436.6 667.8,519.2"/><polygon points="646.1,512.1 667.8,522.1 667.8,519.2 646.1,509.2"/><polygon points="646.1,509.2 1045.9,427.2 1068.2,436.6 667.8,519.2"/></g><polyline fill="none" stroke="#009c90" stroke-width="0.9" points="646.1,512.1 667.8,522.1 1068.2,439.5"/><g fill="#00c8bb"><polygon points="667.8,519.2 1068.2,436.6 1068.2,433.8 667.8,516.3"/><polygon points="646.1,509.2 667.8,519.2 667.8,516.3 646.1,506.3"/><polygon points="646.1,506.3 1045.9,424.3 1068.2,433.8 667.8,516.3"/></g><polyline fill="none" stroke="#009c90" stroke-width="0.9" points="646.1,509.2 667.8,519.2 1068.2,436.6"/><g fill="#00c8bb"><polygon points="667.8,516.3 1068.2,433.8 1068.3,430.9 667.8,513.3"/><polygon points="646.1,506.3 667.8,516.3 667.8,513.3 646.1,503.4"/><polygon points="646.1,503.4 1045.9,421.5 1068.3,430.9 667.8,513.3"/></g><polyline fill="none" stroke="#009c90" stroke-width="0.9" points="646.1,506.3 667.8,516.3 1068.2,433.8"/><g fill="#00c8bb"><polygon points="667.8,513.3 1068.3,430.9 1068.3,428.0 667.8,510.4"/><polygon points="646.1,503.4 667.8,513.3 667.8,510.4 646.1,500.4"/><polygon points="646.1,500.4 1046.0,418.6 1068.3,428.0 667.8,510.4"/></g><polyline fill="none" stroke="#009c90" stroke-width="0.9" points="646.1,503.4 667.8,513.3 1068.3,430.9"/><g fill="#00c8bb"><polygon points="667.8,510.4 1068.3,428.0 1068.3,425.2 667.8,507.4"/><polygon points="646.1,500.4 667.8,510.4 667.8,507.4 646.1,497.5"/><polygon points="646.1,497.5 1046.0,415.7 1068.3,425.2 667.8,507.4"/></g><polyline fill="none" stroke="#009c90" stroke-width="0.9" points="646.1,500.4 667.8,510.4 1068.3,428.0"/><g fill="#00c8bb"><polygon points="667.8,507.4 1068.3,425.2 1068.4,422.3 667.8,504.5"/><polygon points="646.1,497.5 667.8,507.4 667.8,504.5 646.1,494.6"/><polygon points="646.1,494.6 1046.0,412.9 1068.4,422.3 667.8,504.5"/></g><polyline fill="none" stroke="#009c90" stroke-width="0.9" points="646.1,497.5 667.8,507.4 1068.3,425.2"/><g fill="#00c8bb"><polygon points="667.8,504.5 1068.4,422.3 1068.4,419.4 667.7,501.6"/><polygon points="646.1,494.6 667.8,504.5 667.7,501.6 646.1,491.6"/><polygon points="646.1,491.6 1046.1,410.0 1068.4,419.4 667.7,501.6"/></g><polyline fill="none" stroke="#009c90" stroke-width="0.9" points="646.1,494.6 667.8,504.5 1068.4,422.3"/><g fill="#00c8bb"><polygon points="667.7,501.6 1068.4,419.4 1068.4,416.6 667.7,498.6"/><polygon points="646.1,491.6 667.7,501.6 667.7,498.6 646.1,488.7"/><polygon points="646.1,488.7 1046.1,407.2 1068.4,416.6 667.7,498.6"/></g><polyline fill="none" stroke="#009c90" stroke-width="0.9" points="646.1,491.6 667.7,501.6 1068.4,419.4"/><g fill="#00c8bb"><polygon points="667.7,498.6 1068.4,416.6 1068.5,413.7 667.7,495.7"/><polygon points="646.1,488.7 667.7,498.6 667.7,495.7 646.1,485.8"/><polygon points="646.1,485.8 1046.1,404.3 1068.5,413.7 667.7,495.7"/></g><polyline fill="none" stroke="#009c90" stroke-width="0.9" points="646.1,488.7 667.7,498.6 1068.4,416.6"/><g fill="#00c8bb"><polygon points="667.7,495.7 1068.5,413.7 1068.5,410.8 667.7,492.8"/><polygon points="646.1,485.8 667.7,495.7 667.7,492.8 646.0,482.8"/><polygon points="646.0,482.8 1046.1,401.4 1068.5,410.8 667.7,492.8"/></g><polyline fill="none" stroke="#009c90" stroke-width="0.9" points="646.1,485.8 667.7,495.7 1068.5,413.7"/><g fill="#00c8bb"><polygon points="667.7,492.8 1068.5,410.8 1068.5,408.0 667.7,489.8"/><polygon points="646.0,482.8 667.7,492.8 667.7,489.8 646.0,479.9"/><polygon points="646.0,479.9 1046.2,398.6 1068.5,408.0 667.7,489.8"/></g><polyline fill="none" stroke="#009c90" stroke-width="0.9" points="646.0,482.8 667.7,492.8 1068.5,410.8"/><g fill="#d40000"><polygon points="1061.0,412.4 1068.5,410.8 1068.5,408.0 1061.0,409.5"/><polygon points="1038.7,400.1 1046.2,398.6 1068.5,408.0 1061.0,409.5"/></g><polyline fill="none" stroke="#a00000" stroke-width="0.9" points="1061.0,412.4 1068.5,410.8"/><g fill="#00c8bb"><polygon points="667.7,489.8 1068.5,408.0 1068.5,405.1 667.7,486.9"/><polygon points="646.0,479.9 667.7,489.8 667.7,486.9 646.0,477.0"/><polygon points="646.0,477.0 1046.2,395.7 1068.5,405.1 667.7,486.9"/></g><polyline fill="none" stroke="#009c90" stroke-width="0.9" points="646.0,479.9 667.7,489.8 1068.5,408.0"/><g fill="#00c8bb"><polygon points="667.7,486.9 1068.5,405.1 1068.6,402.2 667.7,483.9"/><polygon points="646.0,477.0 667.7,486.9 667.7,483.9 646.0,474.0"/><polygon points="646.0,474.0 1046.2,392.9 1068.6,402.2 667.7,483.9"/></g><polyline fill="none" stroke="#009c90" stroke-width="0.9" points="646.0,477.0 667.7,486.9 1068.5,405.1"/><g fill="#d40000"><polygon points="667.7,486.9 843.0,451.1 843.0,448.2 667.7,483.9"/><polygon points="646.0,477.0 667.7,486.9 667.7,483.9 646.0,474.0"/><polygon points="646.0,474.0 821.0,438.5 843.0,448.2 667.7,483.9"/></g><polyline fill="none" stroke="#a00000" stroke-width="0.9" points="646.0,477.0 667.7,486.9 843.0,451.1"/><g fill="#d40000"><polygon points="1061.0,406.6 1068.5,405.1 1068.6,402.2 1061.0,403.8"/><polygon points="1038.7,394.4 1046.2,392.9 1068.6,402.2 1061.0,403.8"/></g><polyline fill="none" stroke="#a00000" stroke-width="0.9" points="1061.0,406.6 1068.5,405.1"/><g fill="#00c8bb"><polygon points="667.7,483.9 1068.6,402.2 1068.6,399.4 667.7,481.0"/><polygon points="646.0,474.0 667.7,483.9 667.7,481.0 646.0,471.1"/><polygon points="646.0,471.1 1046.2,390.0 1068.6,399.4 667.7,481.0"/></g><polyline fill="none" stroke="#009c90" stroke-width="0.9" points="646.0,474.0 667.7,483.9 1068.6,402.2"/><g fill="#d40000"><polygon points="1061.0,403.8 1068.6,402.2 1068.6,399.4 1061.0,400.9"/><polygon points="1038.7,391.5 1046.2,390.0 1068.6,399.4 1061.0,400.9"/></g><polyline fill="none" stroke="#a00000" stroke-width="0.9" points="1061.0,403.8 1068.6,402.2"/><g fill="#00c8bb"><polygon points="667.7,481.0 1068.6,399.4 1068.6,396.5 667.7,478.0"/><polygon points="646.0,471.1 667.7,481.0 667.7,478.0 646.0,468.2"/><polygon points="646.0,468.2 1046.3,387.1 1068.6,396.5 667.7,478.0"/></g><polyline fill="none" stroke="#009c90" stroke-width="0.9" points="646.0,471.1 667.7,481.0 1068.6,399.4"/><g fill="#00c8bb"><polygon points="667.7,478.0 1068.6,396.5 1068.7,393.6 667.7,475.1"/><polygon points="646.0,468.2 667.7,478.0 667.7,475.1 646.0,465.2"/><polygon points="646.0,465.2 1046.3,384.3 1068.7,393.6 667.7,475.1"/></g><polyline fill="none" stroke="#009c90" stroke-width="0.9" points="646.0,468.2 667.7,478.0 1068.6,396.5"/><g fill="#00c8bb"><polygon points="667.7,475.1 1068.7,393.6 1068.7,390.7 667.7,472.2"/><polygon points="646.0,465.2 667.7,475.1 667.7,472.2 646.0,462.3"/><polygon points="646.0,462.3 1046.3,381.4 1068.7,390.7 667.7,472.2"/></g><polyline fill="none" stroke="#009c90" stroke-width="0.9" points="646.0,465.2 667.7,475.1 1068.7,393.6"/><g fill="#d40000"><polygon points="680.0,472.6 843.0,439.5 843.0,436.6 680.0,469.7"/><polygon points="658.3,459.8 821.0,426.9 843.0,436.6 680.0,469.7"/></g><polyline fill="none" stroke="#a00000" stroke-width="0.9" points="680.0,472.6 843.0,439.5"/><g fill="#00c8bb"><polygon points="667.7,472.2 1068.7,390.7 1068.7,387.9 667.7,469.2"/><polygon points="646.0,462.3 667.7,472.2 667.7,469.2 646.0,459.4"/><polygon points="646.0,459.4 1046.4,378.5 1068.7,387.9 667.7,469.2"/></g><polyline fill="none" stroke="#009c90" stroke-width="0.9" points="646.0,462.3 667.7,472.2 1068.7,390.7"/><g fill="#c83c3c"><polygon points="680.0,469.7 885.0,428.0 885.0,425.1 680.0,466.7"/><polygon points="658.3,456.9 862.9,415.6 885.0,425.1 680.0,466.7"/></g><polyline fill="none" stroke="#a02020" stroke-width="0.9" points="680.0,469.7 885.0,428.0"/><g fill="#c83c3c"><polygon points="680.0,469.7 843.0,436.6 843.0,433.6 680.0,466.7"/><polygon points="658.3,456.9 821.0,424.0 843.0,433.6 680.0,466.7"/></g><polyline fill="none" stroke="#a02020" stroke-width="0.9" points="680.0,469.7 843.0,436.6"/><g fill="#00c8bb"><polygon points="667.7,469.2 1068.7,387.9 1068.7,385.0 667.7,466.3"/><polygon points="646.0,459.4 667.7,469.2 667.7,466.3 646.0,456.4"/><polygon points="646.0,456.4 1046.4,375.7 1068.7,385.0 667.7,466.3"/></g><polyline fill="none" stroke="#009c90" stroke-width="0.9" points="646.0,459.4 667.7,469.2 1068.7,387.9"/><g fill="#c83c3c"><polygon points="680.0,466.7 885.0,425.1 885.0,422.2 680.0,463.8"/><polygon points="658.3,454.0 862.9,412.7 885.0,422.2 680.0,463.8"/></g><polyline fill="none" stroke="#a02020" stroke-width="0.9" points="680.0,466.7 885.0,425.1"/><g fill="#00c8bb"><polygon points="667.7,466.3 1068.7,385.0 1068.8,382.1 667.6,463.3"/><polygon points="646.0,456.4 667.7,466.3 667.6,463.3 645.9,453.5"/><polygon points="645.9,453.5 1046.4,372.8 1068.8,382.1 667.6,463.3"/></g><polyline fill="none" stroke="#009c90" stroke-width="0.9" points="646.0,456.4 667.7,466.3 1068.7,385.0"/><g fill="#d40000"><polygon points="680.0,463.8 885.0,422.2 885.0,419.3 680.0,460.8"/><polygon points="658.3,451.0 862.9,409.8 885.0,419.3 680.0,460.8"/></g><polyline fill="none" stroke="#a00000" stroke-width="0.9" points="680.0,463.8 885.0,422.2"/><g fill="#00c8bb"><polygon points="667.6,463.3 1068.8,382.1 1068.8,379.2 667.6,460.4"/><polygon points="645.9,453.5 667.6,463.3 667.6,460.4 645.9,450.6"/><polygon points="645.9,450.6 1046.4,369.9 1068.8,379.2 667.6,460.4"/></g><polyline fill="none" stroke="#009c90" stroke-width="0.9" points="645.9,453.5 667.6,463.3 1068.8,382.1"/><g fill="#d40000"><polygon points="667.6,463.3 885.0,419.3 885.0,416.4 667.6,460.4"/><polygon points="645.9,453.5 667.6,463.3 667.6,460.4 645.9,450.6"/><polygon points="645.9,450.6 862.9,406.9 885.0,416.4 667.6,460.4"/></g><polyline fill="none" stroke="#a00000" stroke-width="0.9" points="645.9,453.5 667.6,463.3 885.0,419.3"/><g fill="#00c8bb"><polygon points="667.6,460.4 1068.8,379.2 1068.8,376.4 667.6,457.4"/><polygon points="645.9,450.6 667.6,460.4 667.6,457.4 645.9,447.6"/><polygon points="645.9,447.6 1046.5,367.1 1068.8,376.4 667.6,457.4"/></g><polyline fill="none" stroke="#009c90" stroke-width="0.9" points="645.9,450.6 667.6,460.4 1068.8,379.2"/><g fill="#00c8bb"><polygon points="667.6,457.4 1068.8,376.4 1068.9,373.5 667.6,454.5"/><polygon points="645.9,447.6 667.6,457.4 667.6,454.5 645.9,444.7"/><polygon points="645.9,444.7 1046.5,364.2 1068.9,373.5 667.6,454.5"/></g><polyline fill="none" stroke="#009c90" stroke-width="0.9" points="645.9,447.6 667.6,457.4 1068.8,376.4"/><g fill="#c83c3c"><polygon points="890.0,412.5 1025.0,385.2 1025.0,382.3 890.0,409.6"/><polygon points="867.9,400.1 1002.7,373.0 1025.0,382.3 890.0,409.6"/></g><polyline fill="none" stroke="#a02020" stroke-width="0.9" points="890.0,412.5 1025.0,385.2"/><g fill="#d40000"><polygon points="1061.0,378.0 1068.8,376.4 1068.9,373.5 1061.0,375.1"/><polygon points="1038.7,365.8 1046.5,364.2 1068.9,373.5 1061.0,375.1"/></g><polyline fill="none" stroke="#a00000" stroke-width="0.9" points="1061.0,378.0 1068.8,376.4"/><g fill="#00c8bb"><polygon points="667.6,454.5 1068.9,373.5 1068.9,370.6 667.6,451.5"/><polygon points="645.9,444.7 667.6,454.5 667.6,451.5 645.9,441.7"/><polygon points="645.9,441.7 1046.5,361.3 1068.9,370.6 667.6,451.5"/></g><polyline fill="none" stroke="#009c90" stroke-width="0.9" points="645.9,444.7 667.6,454.5 1068.9,373.5"/><g fill="#c83c3c"><polygon points="890.0,409.6 1025.0,382.4 1025.0,379.5 890.0,406.7"/><polygon points="867.9,397.2 1002.7,370.1 1025.0,379.5 890.0,406.7"/></g><polyline fill="none" stroke="#a02020" stroke-width="0.9" points="890.0,409.6 1025.0,382.4"/><g fill="#00c8bb"><polygon points="667.6,451.5 1068.9,370.6 1068.9,367.7 667.6,448.6"/><polygon points="645.9,441.7 667.6,451.5 667.6,448.6 645.9,438.8"/><polygon points="645.9,438.8 1046.5,358.5 1068.9,367.7 667.6,448.6"/></g><polyline fill="none" stroke="#009c90" stroke-width="0.9" points="645.9,441.7 667.6,451.5 1068.9,370.6"/><g fill="#c83c3c"><polygon points="890.0,406.7 1025.0,379.5 1025.0,376.6 890.0,403.8"/><polygon points="867.9,394.3 1002.7,367.3 1025.0,376.6 890.0,403.8"/></g><polyline fill="none" stroke="#a02020" stroke-width="0.9" points="890.0,406.7 1025.0,379.5"/><g fill="#00c8bb"><polygon points="667.6,448.6 1068.9,367.7 1069.0,364.9 667.6,445.6"/><polygon points="645.9,438.8 667.6,448.6 667.6,445.6 645.9,435.9"/><polygon points="645.9,435.9 1046.6,355.6 1069.0,364.9 667.6,445.6"/></g><polyline fill="none" stroke="#009c90" stroke-width="0.9" points="645.9,438.8 667.6,448.6 1068.9,367.7"/><g fill="#d40000"><polygon points="890.0,403.8 1025.0,376.6 1025.0,373.7 890.0,400.9"/><polygon points="867.9,391.4 1002.7,364.4 1025.0,373.7 890.0,400.9"/></g><polyline fill="none" stroke="#a00000" stroke-width="0.9" points="890.0,403.8 1025.0,376.6"/><g fill="#00c8bb"><polygon points="667.6,445.6 1069.0,364.9 1069.0,362.0 667.6,442.7"/><polygon points="645.9,435.9 667.6,445.6 667.6,442.7 645.9,432.9"/><polygon points="645.9,432.9 1046.6,352.7 1069.0,362.0 667.6,442.7"/></g><polyline fill="none" stroke="#009c90" stroke-width="0.9" points="645.9,435.9 667.6,445.6 1069.0,364.9"/><g fill="#00c8bb"><polygon points="667.6,442.7 1069.0,362.0 1069.0,359.1 667.6,439.7"/><polygon points="645.9,432.9 667.6,442.7 667.6,439.7 645.9,430.0"/><polygon points="645.9,430.0 1046.6,349.9 1069.0,359.1 667.6,439.7"/></g><polyline fill="none" stroke="#009c90" stroke-width="0.9" points="645.9,432.9 667.6,442.7 1069.0,362.0"/><g fill="#d40000"><polygon points="667.6,442.7 668.0,442.6 668.0,439.7 667.6,439.7"/><polygon points="645.9,432.9 667.6,442.7 667.6,439.7 645.9,430.0"/><polygon points="645.9,430.0 646.3,429.9 668.0,439.7 667.6,439.7"/></g><polyline fill="none" stroke="#a00000" stroke-width="0.9" points="645.9,432.9 667.6,442.7 668.0,442.6"/><g fill="#00c8bb"><polygon points="667.6,439.7 1069.0,359.1 1069.0,356.2 667.6,436.8"/><polygon points="645.9,430.0 667.6,439.7 667.6,436.8 645.9,427.0"/><polygon points="645.9,427.0 1046.7,347.0 1069.0,356.2 667.6,436.8"/></g><polyline fill="none" stroke="#009c90" stroke-width="0.9" points="645.9,430.0 667.6,439.7 1069.0,359.1"/><g fill="#d40000"><polygon points="667.6,439.7 668.0,439.7 668.0,436.7 667.6,436.8"/><polygon points="645.9,430.0 667.6,439.7 667.6,436.8 645.9,427.0"/><polygon points="645.9,427.0 646.3,427.0 668.0,436.7 667.6,436.8"/></g><polyline fill="none" stroke="#a00000" stroke-width="0.9" points="645.9,430.0 667.6,439.7 668.0,439.7"/><g fill="#00c8bb"><polygon points="667.6,436.8 1069.0,356.2 1069.1,353.3 667.6,433.8"/><polygon points="645.9,427.0 667.6,436.8 667.6,433.8 645.9,424.1"/><polygon points="645.9,424.1 1046.7,344.1 1069.1,353.3 667.6,433.8"/></g><polyline fill="none" stroke="#009c90" stroke-width="0.9" points="645.9,427.0 667.6,436.8 1069.0,356.2"/><g fill="#d40000"><polygon points="667.6,436.8 668.0,436.7 668.0,433.8 667.6,433.8"/><polygon points="645.9,427.0 667.6,436.8 667.6,433.8 645.9,424.1"/><polygon points="645.9,424.1 646.3,424.0 668.0,433.8 667.6,433.8"/></g><polyline fill="none" stroke="#a00000" stroke-width="0.9" points="645.9,427.0 667.6,436.8 668.0,436.7"/><g fill="#00c8bb"><polygon points="667.6,433.8 1069.1,353.3 1069.1,350.5 667.6,430.9"/><polygon points="645.9,424.1 667.6,433.8 667.6,430.9 645.8,421.2"/><polygon points="645.8,421.2 1046.7,341.2 1069.1,350.5 667.6,430.9"/></g><polyline fill="none" stroke="#009c90" stroke-width="0.9" points="645.9,424.1 667.6,433.8 1069.1,353.3"/><g fill="#d40000"><polygon points="667.6,433.8 827.0,401.9 827.0,399.0 667.6,430.9"/><polygon points="645.9,424.1 667.6,433.8 667.6,430.9 645.8,421.2"/><polygon points="645.8,421.2 805.0,389.4 827.0,399.0 667.6,430.9"/></g><polyline fill="none" stroke="#a00000" stroke-width="0.9" points="645.9,424.1 667.6,433.8 827.0,401.9"/><g fill="#d40000"><polygon points="667.6,433.8 668.0,433.8 668.0,430.8 667.6,430.9"/><polygon points="645.9,424.1 667.6,433.8 667.6,430.9 645.8,421.2"/><polygon points="645.8,421.2 646.3,421.1 668.0,430.8 667.6,430.9"/></g><polyline fill="none" stroke="#a00000" stroke-width="0.9" points="645.9,424.1 667.6,433.8 668.0,433.8"/><g fill="#00c8bb"><polygon points="667.6,430.9 1069.1,350.5 1069.1,347.6 667.6,427.9"/><polygon points="645.8,421.2 667.6,430.9 667.6,427.9 645.8,418.2"/><polygon points="645.8,418.2 1046.7,338.4 1069.1,347.6 667.6,427.9"/></g><polyline fill="none" stroke="#009c90" stroke-width="0.9" points="645.8,421.2 667.6,430.9 1069.1,350.5"/><g fill="#d40000"><polygon points="890.0,386.3 1069.1,350.5 1069.1,347.6 890.0,383.4"/><polygon points="867.9,374.0 1046.7,338.4 1069.1,347.6 890.0,383.4"/></g><polyline fill="none" stroke="#a00000" stroke-width="0.9" points="890.0,386.3 1069.1,350.5"/><g fill="#d40000"><polygon points="667.6,430.9 668.0,430.8 668.0,427.8 667.6,427.9"/><polygon points="645.8,421.2 667.6,430.9 667.6,427.9 645.8,418.2"/><polygon points="645.8,418.2 646.3,418.1 668.0,427.8 667.6,427.9"/></g><polyline fill="none" stroke="#a00000" stroke-width="0.9" points="645.8,421.2 667.6,430.9 668.0,430.8"/><g fill="#00c8bb"><polygon points="667.6,427.9 1069.1,347.6 1069.2,344.7 667.6,425.0"/><polygon points="645.8,418.2 667.6,427.9 667.6,425.0 645.8,415.3"/><polygon points="645.8,415.3 1046.8,335.5 1069.2,344.7 667.6,425.0"/></g><polyline fill="none" stroke="#009c90" stroke-width="0.9" points="645.8,418.2 667.6,427.9 1069.1,347.6"/><g fill="#d40000"><polygon points="667.6,427.9 668.0,427.8 668.0,424.9 667.6,425.0"/><polygon points="645.8,418.2 667.6,427.9 667.6,425.0 645.8,415.3"/><polygon points="645.8,415.3 646.3,415.2 668.0,424.9 667.6,425.0"/></g><polyline fill="none" stroke="#a00000" stroke-width="0.9" points="645.8,418.2 667.6,427.9 668.0,427.8"/><g fill="#00c8bb"><polygon points="667.6,425.0 1069.2,344.7 1069.2,341.8 667.5,422.0"/><polygon points="645.8,415.3 667.6,425.0 667.5,422.0 645.8,412.3"/><polygon points="645.8,412.3 1046.8,332.6 1069.2,341.8 667.5,422.0"/></g><polyline fill="none" stroke="#009c90" stroke-width="0.9" points="645.8,415.3 667.6,425.0 1069.2,344.7"/><g fill="#d40000"><polygon points="890.0,380.5 1069.2,344.7 1069.2,341.8 890.0,377.6"/><polygon points="867.9,368.2 1046.8,332.6 1069.2,341.8 890.0,377.6"/></g><polyline fill="none" stroke="#a00000" stroke-width="0.9" points="890.0,380.5 1069.2,344.7"/><g fill="#d40000"><polygon points="667.6,425.0 721.0,414.3 721.0,411.4 667.5,422.0"/><polygon points="645.8,415.3 667.6,425.0 667.5,422.0 645.8,412.3"/><polygon points="645.8,412.3 699.2,401.7 721.0,411.4 667.5,422.0"/></g><polyline fill="none" stroke="#a00000" stroke-width="0.9" points="645.8,415.3 667.6,425.0 721.0,414.3"/><g fill="#d40000"><polygon points="667.6,425.0 668.0,424.9 668.0,421.9 667.5,422.0"/><polygon points="645.8,415.3 667.6,425.0 667.5,422.0 645.8,412.3"/><polygon points="645.8,412.3 646.3,412.2 668.0,421.9 667.5,422.0"/></g><polyline fill="none" stroke="#a00000" stroke-width="0.9" points="645.8,415.3 667.6,425.0 668.0,424.9"/><g fill="#00c8bb"><polygon points="667.5,422.0 1069.2,341.8 1069.2,338.9 667.5,419.1"/><polygon points="645.8,412.3 667.5,422.0 667.5,419.1 645.8,409.4"/><polygon points="645.8,409.4 1046.8,329.8 1069.2,338.9 667.5,419.1"/></g><polyline fill="none" stroke="#009c90" stroke-width="0.9" points="645.8,412.3 667.5,422.0 1069.2,341.8"/><g fill="#d40000"><polygon points="890.0,377.6 1069.2,341.8 1069.2,338.9 890.0,374.7"/><polygon points="867.9,365.3 1046.8,329.8 1069.2,338.9 890.0,374.7"/></g><polyline fill="none" stroke="#a00000" stroke-width="0.9" points="890.0,377.6 1069.2,341.8"/><g fill="#d40000"><polygon points="667.5,422.0 686.0,418.3 686.0,415.4 667.5,419.1"/><polygon points="645.8,412.3 667.5,422.0 667.5,419.1 645.8,409.4"/><polygon points="645.8,409.4 664.2,405.7 686.0,415.4 667.5,419.1"/></g><polyline fill="none" stroke="#a00000" stroke-width="0.9" points="645.8,412.3 667.5,422.0 686.0,418.3"/><g fill="#00c8bb"><polygon points="667.5,419.1 1069.2,338.9 1069.2,336.1 667.5,416.1"/><polygon points="645.8,409.4 667.5,419.1 667.5,416.1 645.8,406.4"/><polygon points="645.8,406.4 1046.8,326.9 1069.2,336.1 667.5,416.1"/></g><polyline fill="none" stroke="#009c90" stroke-width="0.9" points="645.8,409.4 667.5,419.1 1069.2,338.9"/><g fill="#d40000"><polygon points="667.5,419.1 686.0,415.4 686.0,412.4 667.5,416.1"/><polygon points="645.8,409.4 667.5,419.1 667.5,416.1 645.8,406.4"/><polygon points="645.8,406.4 664.2,402.8 686.0,412.4 667.5,416.1"/></g><polyline fill="none" stroke="#a00000" stroke-width="0.9" points="645.8,409.4 667.5,419.1 686.0,415.4"/><g fill="#00c8bb"><polygon points="667.5,416.1 1069.2,336.1 1069.3,333.2 667.5,413.2"/><polygon points="645.8,406.4 667.5,416.1 667.5,413.2 645.8,403.5"/><polygon points="645.8,403.5 1046.9,324.0 1069.3,333.2 667.5,413.2"/></g><polyline fill="none" stroke="#009c90" stroke-width="0.9" points="645.8,406.4 667.5,416.1 1069.2,336.1"/><g fill="#d40000"><polygon points="890.0,371.8 1069.2,336.1 1069.3,333.2 890.0,368.9"/><polygon points="867.9,359.5 1046.9,324.0 1069.3,333.2 890.0,368.9"/></g><polyline fill="none" stroke="#a00000" stroke-width="0.9" points="890.0,371.8 1069.2,336.1"/><g fill="#d40000"><polygon points="667.5,416.1 686.0,412.4 686.0,409.5 667.5,413.2"/><polygon points="645.8,406.4 667.5,416.1 667.5,413.2 645.8,403.5"/><polygon points="645.8,403.5 664.2,399.8 686.0,409.5 667.5,413.2"/></g><polyline fill="none" stroke="#a00000" stroke-width="0.9" points="645.8,406.4 667.5,416.1 686.0,412.4"/><g fill="#00c8bb"><polygon points="667.5,413.2 1069.3,333.2 1069.3,330.3 667.5,410.2"/><polygon points="645.8,403.5 667.5,413.2 667.5,410.2 645.8,400.5"/><polygon points="645.8,400.5 1046.9,321.1 1069.3,330.3 667.5,410.2"/></g><polyline fill="none" stroke="#009c90" stroke-width="0.9" points="645.8,403.5 667.5,413.2 1069.3,333.2"/><g fill="#d40000"><polygon points="890.0,368.9 1069.3,333.2 1069.3,330.3 890.0,366.0"/><polygon points="867.9,356.6 1046.9,321.1 1069.3,330.3 890.0,366.0"/></g><polyline fill="none" stroke="#a00000" stroke-width="0.9" points="890.0,368.9 1069.3,333.2"/><g fill="#d40000"><polygon points="667.5,413.2 686.0,409.5 686.0,406.5 667.5,410.2"/><polygon points="645.8,403.5 667.5,413.2 667.5,410.2 645.8,400.5"/><polygon points="645.8,400.5 664.2,396.9 686.0,406.5 667.5,410.2"/></g><polyline fill="none" stroke="#a00000" stroke-width="0.9" points="645.8,403.5 667.5,413.2 686.0,409.5"/><g fill="#00c8bb"><polygon points="667.5,410.2 1069.3,330.3 1069.3,327.4 667.5,407.3"/><polygon points="645.8,400.5 667.5,410.2 667.5,407.3 645.8,397.6"/><polygon points="645.8,397.6 1046.9,318.3 1069.3,327.4 667.5,407.3"/></g><polyline fill="none" stroke="#009c90" stroke-width="0.9" points="645.8,400.5 667.5,410.2 1069.3,330.3"/><g fill="#d40000"><polygon points="667.5,410.2 686.0,406.5 686.0,403.6 667.5,407.3"/><polygon points="645.8,400.5 667.5,410.2 667.5,407.3 645.8,397.6"/><polygon points="645.8,397.6 664.2,393.9 686.0,403.6 667.5,407.3"/></g><polyline fill="none" stroke="#a00000" stroke-width="0.9" points="645.8,400.5 667.5,410.2 686.0,406.5"/><g fill="#00c8bb"><polygon points="667.5,407.3 1069.3,327.4 1069.4,324.5 667.5,404.3"/><polygon points="645.8,397.6 667.5,407.3 667.5,404.3 645.8,394.6"/><polygon points="645.8,394.6 1047.0,315.4 1069.4,324.5 667.5,404.3"/></g><polyline fill="none" stroke="#009c90" stroke-width="0.9" points="645.8,397.6 667.5,407.3 1069.3,327.4"/><g fill="#d40000"><polygon points="667.5,407.3 686.0,403.6 686.0,400.6 667.5,404.3"/><polygon points="645.8,397.6 667.5,407.3 667.5,404.3 645.8,394.6"/><polygon points="645.8,394.6 664.2,391.0 686.0,400.6 667.5,404.3"/></g><polyline fill="none" stroke="#a00000" stroke-width="0.9" points="645.8,397.6 667.5,407.3 686.0,403.6"/><g fill="#00c8bb"><polygon points="667.5,404.3 1069.4,324.5 1069.4,321.6 667.5,401.3"/><polygon points="645.8,394.6 667.5,404.3 667.5,401.3 645.7,391.7"/><polygon points="645.7,391.7 1047.0,312.5 1069.4,321.6 667.5,401.3"/></g><polyline fill="none" stroke="#009c90" stroke-width="0.9" points="645.8,394.6 667.5,404.3 1069.4,324.5"/><g fill="#00c8bb"><polygon points="667.5,401.3 1069.4,321.6 1069.4,318.8 667.5,398.4"/><polygon points="645.7,391.7 667.5,401.3 667.5,398.4 645.7,388.7"/><polygon points="645.7,388.7 1047.0,309.6 1069.4,318.8 667.5,398.4"/></g><polyline fill="none" stroke="#009c90" stroke-width="0.9" points="645.7,391.7 667.5,401.3 1069.4,321.6"/><g fill="#d40000"><polygon points="905.0,354.2 1040.0,327.5 1040.0,324.6 905.0,351.3"/><polygon points="882.9,342.0 1017.6,315.4 1040.0,324.6 905.0,351.3"/></g><polyline fill="none" stroke="#a00000" stroke-width="0.9" points="905.0,354.2 1040.0,327.5"/><g fill="#00c8bb"><polygon points="667.5,398.4 1069.4,318.8 1069.5,315.9 667.5,395.4"/><polygon points="645.7,388.7 667.5,398.4 667.5,395.4 645.7,385.8"/><polygon points="645.7,385.8 1047.0,306.7 1069.5,315.9 667.5,395.4"/></g><polyline fill="none" stroke="#009c90" stroke-width="0.9" points="645.7,388.7 667.5,398.4 1069.4,318.8"/><g fill="#d40000"><polygon points="905.0,351.3 1020.0,328.5 1020.0,325.7 905.0,348.4"/><polygon points="882.9,339.1 997.7,316.5 1020.0,325.7 905.0,348.4"/></g><polyline fill="none" stroke="#a00000" stroke-width="0.9" points="905.0,351.3 1020.0,328.5"/><g fill="#00c8bb"><polygon points="667.5,395.4 1069.5,315.9 1069.5,313.0 667.5,392.5"/><polygon points="645.7,385.8 667.5,395.4 667.5,392.5 645.7,382.8"/><polygon points="645.7,382.8 1047.1,303.9 1069.5,313.0 667.5,392.5"/></g><polyline fill="none" stroke="#009c90" stroke-width="0.9" points="645.7,385.8 667.5,395.4 1069.5,315.9"/><g fill="#c83c3c"><polygon points="905.0,348.4 1036.0,322.5 1036.0,319.6 905.0,345.5"/><polygon points="882.9,336.2 1013.6,310.4 1036.0,319.6 905.0,345.5"/></g><polyline fill="none" stroke="#a02020" stroke-width="0.9" points="905.0,348.4 1036.0,322.5"/><g fill="#00c8bb"><polygon points="667.5,392.5 1069.5,313.0 1069.5,310.1 667.5,389.5"/><polygon points="645.7,382.8 667.5,392.5 667.5,389.5 645.7,379.9"/><polygon points="645.7,379.9 1047.1,301.0 1069.5,310.1 667.5,389.5"/></g><polyline fill="none" stroke="#009c90" stroke-width="0.9" points="645.7,382.8 667.5,392.5 1069.5,313.0"/><g fill="#d40000"><polygon points="905.0,345.5 1024.0,322.0 1024.0,319.1 905.0,342.6"/><polygon points="882.9,333.3 1001.7,309.9 1024.0,319.1 905.0,342.6"/></g><polyline fill="none" stroke="#a00000" stroke-width="0.9" points="905.0,345.5 1024.0,322.0"/><g fill="#00c8bb"><polygon points="667.5,389.5 1069.5,310.1 1069.5,307.2 667.5,386.5"/><polygon points="645.7,379.9 667.5,389.5 667.5,386.5 645.7,376.9"/><polygon points="645.7,376.9 1047.1,298.1 1069.5,307.2 667.5,386.5"/></g><polyline fill="none" stroke="#009c90" stroke-width="0.9" points="645.7,379.9 667.5,389.5 1069.5,310.1"/><g fill="#d40000"><polygon points="905.0,342.6 1042.0,315.5 1042.0,312.6 905.0,339.7"/><polygon points="882.8,330.4 1019.6,303.5 1042.0,312.6 905.0,339.7"/></g><polyline fill="none" stroke="#a00000" stroke-width="0.9" points="905.0,342.6 1042.0,315.5"/><g fill="#00c8bb"><polygon points="667.5,386.5 1069.5,307.2 1069.6,304.3 667.4,383.6"/><polygon points="645.7,376.9 667.5,386.5 667.4,383.6 645.7,374.0"/><polygon points="645.7,374.0 1047.1,295.2 1069.6,304.3 667.4,383.6"/></g><polyline fill="none" stroke="#009c90" stroke-width="0.9" points="645.7,376.9 667.5,386.5 1069.5,307.2"/><g fill="#c83c3c"><polygon points="905.0,339.7 1018.0,317.4 1018.0,314.5 905.0,336.8"/><polygon points="882.8,327.5 995.7,305.3 1018.0,314.5 905.0,336.8"/></g><polyline fill="none" stroke="#a02020" stroke-width="0.9" points="905.0,339.7 1018.0,317.4"/><g fill="#00c8bb"><polygon points="667.4,383.6 1069.3,304.4 1069.4,301.5 667.4,380.6"/><polygon points="645.7,374.0 667.4,383.6 667.4,380.6 645.7,371.0"/><polygon points="645.7,371.0 1046.9,292.4 1069.4,301.5 667.4,380.6"/></g><polyline fill="none" stroke="#009c90" stroke-width="0.9" points="645.7,374.0 667.4,383.6 1069.3,304.4"/><g fill="#d40000"><polygon points="905.0,336.8 1040.0,310.1 1040.0,307.3 905.0,333.8"/><polygon points="882.8,324.6 1017.6,298.1 1040.0,307.3 905.0,333.8"/></g><polyline fill="none" stroke="#a00000" stroke-width="0.9" points="905.0,336.8 1040.0,310.1"/><g fill="#00c8bb"><polygon points="667.4,380.6 1069.1,301.5 1069.2,298.6 667.4,377.7"/><polygon points="645.7,371.0 667.4,380.6 667.4,377.7 645.7,368.1"/><polygon points="645.7,368.1 1046.7,289.5 1069.2,298.6 667.4,377.7"/></g><polyline fill="none" stroke="#009c90" stroke-width="0.9" points="645.7,371.0 667.4,380.6 1069.1,301.5"/><g fill="#d40000"><polygon points="905.0,333.8 1020.0,311.2 1020.0,308.3 905.0,330.9"/><polygon points="882.8,321.6 997.7,299.2 1020.0,308.3 905.0,330.9"/></g><polyline fill="none" stroke="#a00000" stroke-width="0.9" points="905.0,333.8 1020.0,311.2"/><g fill="#00c8bb"><polygon points="667.4,377.7 1068.9,298.7 1069.0,295.8 667.4,374.7"/><polygon points="645.7,368.1 667.4,377.7 667.4,374.7 645.7,365.1"/><polygon points="645.7,365.1 1046.5,286.7 1069.0,295.8 667.4,374.7"/></g><polyline fill="none" stroke="#009c90" stroke-width="0.9" points="645.7,368.1 667.4,377.7 1068.9,298.7"/><g fill="#c83c3c"><polygon points="905.0,330.9 1036.0,305.2 1036.0,302.3 905.0,328.0"/><polygon points="882.8,318.7 1013.6,293.2 1036.0,302.3 905.0,328.0"/></g><polyline fill="none" stroke="#a02020" stroke-width="0.9" points="905.0,330.9 1036.0,305.2"/><g fill="#00c8bb"><polygon points="667.4,374.7 1068.7,295.8 1068.8,292.9 667.4,371.7"/><polygon points="645.7,365.1 667.4,374.7 667.4,371.7 645.7,362.2"/><polygon points="645.7,362.2 1046.3,283.9 1068.8,292.9 667.4,371.7"/></g><polyline fill="none" stroke="#009c90" stroke-width="0.9" points="645.7,365.1 667.4,374.7 1068.7,295.8"/><g fill="#d40000"><polygon points="905.0,328.0 1024.0,304.6 1024.0,301.7 905.0,325.1"/><polygon points="882.8,315.8 1001.7,292.6 1024.0,301.7 905.0,325.1"/></g><polyline fill="none" stroke="#a00000" stroke-width="0.9" points="905.0,328.0 1024.0,304.6"/><g fill="#00c8bb"><polygon points="667.4,371.7 1068.5,293.0 1068.6,290.1 667.4,368.8"/><polygon points="645.7,362.2 667.4,371.7 667.4,368.8 645.6,359.2"/><polygon points="645.6,359.2 1046.1,281.0 1068.6,290.1 667.4,368.8"/></g><polyline fill="none" stroke="#009c90" stroke-width="0.9" points="645.7,362.2 667.4,371.7 1068.5,293.0"/><g fill="#d40000"><polygon points="905.0,325.1 1042.0,298.2 1042.0,295.3 905.0,322.2"/><polygon points="882.8,312.9 1019.6,286.2 1042.0,295.3 905.0,322.2"/></g><polyline fill="none" stroke="#a00000" stroke-width="0.9" points="905.0,325.1 1042.0,298.2"/><g fill="#00c8bb"><polygon points="667.4,368.8 1068.3,290.1 1068.4,287.2 667.4,365.8"/><polygon points="645.6,359.2 667.4,368.8 667.4,365.8 645.6,356.3"/><polygon points="645.6,356.3 1045.9,278.2 1068.4,287.2 667.4,365.8"/></g><polyline fill="none" stroke="#009c90" stroke-width="0.9" points="645.6,359.2 667.4,368.8 1068.3,290.1"/><g fill="#c83c3c"><polygon points="905.0,322.2 1018.0,300.0 1018.0,297.1 905.0,319.3"/><polygon points="882.8,310.0 995.7,288.0 1018.0,297.1 905.0,319.3"/></g><polyline fill="none" stroke="#a02020" stroke-width="0.9" points="905.0,322.2 1018.0,300.0"/><g fill="#00c8bb"><polygon points="667.4,365.8 1068.1,287.3 1068.2,284.4 667.4,362.8"/><polygon points="645.6,356.3 667.4,365.8 667.4,362.8 645.6,353.3"/><polygon points="645.6,353.3 1045.7,275.4 1068.2,284.4 667.4,362.8"/></g><polyline fill="none" stroke="#009c90" stroke-width="0.9" points="645.6,356.3 667.4,365.8 1068.1,287.3"/><g fill="#d40000"><polygon points="905.0,319.3 1040.0,292.8 1040.0,289.9 905.0,316.3"/><polygon points="882.8,307.1 1017.6,280.8 1040.0,289.9 905.0,316.3"/></g><polyline fill="none" stroke="#a00000" stroke-width="0.9" points="905.0,319.3 1040.0,292.8"/><g fill="#00c8bb"><polygon points="667.4,362.8 1067.9,284.4 1068.0,281.5 667.4,359.9"/><polygon points="645.6,353.3 667.4,362.8 667.4,359.9 645.6,350.4"/><polygon points="645.6,350.4 1045.5,272.5 1068.0,281.5 667.4,359.9"/></g><polyline fill="none" stroke="#009c90" stroke-width="0.9" points="645.6,353.3 667.4,362.8 1067.9,284.4"/><g fill="#d40000"><polygon points="905.0,316.3 1020.0,293.8 1020.0,290.9 905.0,313.4"/><polygon points="882.8,304.2 997.6,281.8 1020.0,290.9 905.0,313.4"/></g><polyline fill="none" stroke="#a00000" stroke-width="0.9" points="905.0,316.3 1020.0,293.8"/><g fill="#00c8bb"><polygon points="667.4,359.9 1067.8,281.6 1067.8,278.7 667.4,356.9"/><polygon points="645.6,350.4 667.4,359.9 667.4,356.9 645.6,347.4"/><polygon points="645.6,347.4 1045.3,269.7 1067.8,278.7 667.4,356.9"/></g><polyline fill="none" stroke="#009c90" stroke-width="0.9" points="645.6,350.4 667.4,359.9 1067.8,281.6"/><g fill="#c83c3c"><polygon points="905.0,313.4 1036.0,287.8 1036.0,284.9 905.0,310.5"/><polygon points="882.8,301.3 1013.6,275.8 1036.0,284.9 905.0,310.5"/></g><polyline fill="none" stroke="#a02020" stroke-width="0.9" points="905.0,313.4 1036.0,287.8"/><g fill="#00c8bb"><polygon points="667.4,356.9 1067.6,278.7 1067.6,275.8 667.4,354.0"/><polygon points="645.6,347.4 667.4,356.9 667.4,354.0 645.6,344.4"/><polygon points="645.6,344.4 1045.1,266.8 1067.6,275.8 667.4,354.0"/></g><polyline fill="none" stroke="#009c90" stroke-width="0.9" points="645.6,347.4 667.4,356.9 1067.6,278.7"/><g fill="#d40000"><polygon points="905.0,310.5 1024.0,287.3 1024.0,284.3 905.0,307.6"/><polygon points="882.8,298.4 1001.6,275.3 1024.0,284.3 905.0,307.6"/></g><polyline fill="none" stroke="#a00000" stroke-width="0.9" points="905.0,310.5 1024.0,287.3"/><g fill="#00c8bb"><polygon points="667.4,354.0 1067.3,275.9 1067.3,273.0 667.4,351.0"/><polygon points="645.6,344.4 667.4,354.0 667.4,351.0 645.6,341.5"/><polygon points="645.6,341.5 1044.9,264.0 1067.3,273.0 667.4,351.0"/></g><polyline fill="none" stroke="#009c90" stroke-width="0.9" points="645.6,344.4 667.4,354.0 1067.3,275.9"/><g fill="#d40000"><polygon points="905.0,307.6 1042.0,280.8 1042.0,277.9 905.0,304.7"/><polygon points="882.8,295.4 1019.6,268.9 1042.0,277.9 905.0,304.7"/></g><polyline fill="none" stroke="#a00000" stroke-width="0.9" points="905.0,307.6 1042.0,280.8"/><g fill="#00c8bb"><polygon points="667.4,351.0 1067.0,273.1 1067.0,270.2 667.4,348.0"/><polygon points="645.6,341.5 667.4,351.0 667.4,348.0 645.6,338.5"/><polygon points="645.6,338.5 1044.6,261.2 1067.0,270.2 667.4,348.0"/></g><polyline fill="none" stroke="#009c90" stroke-width="0.9" points="645.6,341.5 667.4,351.0 1067.0,273.1"/><g fill="#c83c3c"><polygon points="905.0,304.7 1018.0,282.6 1018.0,279.7 905.0,301.7"/><polygon points="882.8,292.5 995.6,270.7 1018.0,279.7 905.0,301.7"/></g><polyline fill="none" stroke="#a02020" stroke-width="0.9" points="905.0,304.7 1018.0,282.6"/><g fill="#00c8bb"><polygon points="667.9,347.9 1066.7,270.2 1066.7,267.4 667.9,344.9"/><polygon points="646.1,338.4 667.9,347.9 667.9,344.9 646.1,335.5"/><polygon points="646.1,335.5 1044.2,258.4 1066.7,267.4 667.9,344.9"/></g><polyline fill="none" stroke="#009c90" stroke-width="0.9" points="646.1,338.4 667.9,347.9 1066.7,270.2"/><g fill="#d40000"><polygon points="905.0,301.7 1040.0,275.4 1040.0,272.5 905.0,298.8"/><polygon points="882.8,289.6 1017.6,263.5 1040.0,272.5 905.0,298.8"/></g><polyline fill="none" stroke="#a00000" stroke-width="0.9" points="905.0,301.7 1040.0,275.4"/><g fill="#00c8bb"><polygon points="668.4,344.8 1066.4,267.4 1066.4,264.5 668.4,341.9"/><polygon points="646.7,335.4 668.4,344.8 668.4,341.9 646.7,332.4"/><polygon points="646.7,332.4 1043.9,255.5 1066.4,264.5 668.4,341.9"/></g><polyline fill="none" stroke="#009c90" stroke-width="0.9" points="646.7,335.4 668.4,344.8 1066.4,267.4"/><g fill="#d40000"><polygon points="905.0,298.8 1020.0,276.4 1020.0,273.5 905.0,295.9"/><polygon points="882.8,286.7 997.6,264.5 1020.0,273.5 905.0,295.9"/></g><polyline fill="none" stroke="#a00000" stroke-width="0.9" points="905.0,298.8 1020.0,276.4"/><g fill="#00c8bb"><polygon points="669.0,341.8 1066.0,264.6 1066.1,261.7 669.0,338.8"/><polygon points="647.2,332.3 669.0,341.8 669.0,338.8 647.2,329.3"/><polygon points="647.2,329.3 1043.6,252.7 1066.1,261.7 669.0,338.8"/></g><polyline fill="none" stroke="#009c90" stroke-width="0.9" points="647.2,332.3 669.0,341.8 1066.0,264.6"/><g fill="#00c8bb"><polygon points="669.5,338.7 1065.7,261.8 1065.8,258.9 669.5,335.7"/><polygon points="647.7,329.2 669.5,338.7 669.5,335.7 647.7,326.3"/><polygon points="647.7,326.3 1043.3,249.9 1065.8,258.9 669.5,335.7"/></g><polyline fill="none" stroke="#009c90" stroke-width="0.9" points="647.7,329.2 669.5,338.7 1065.7,261.8"/><g fill="#c83c3c"><polygon points="905.0,293.0 1036.0,267.5 1036.0,264.6 905.0,290.0"/><polygon points="882.8,280.9 1013.6,255.6 1036.0,264.6 905.0,290.0"/></g><polyline fill="none" stroke="#a02020" stroke-width="0.9" points="905.0,293.0 1036.0,267.5"/><g fill="#00c8bb"><polygon points="670.1,335.6 1065.4,258.9 1065.5,256.0 670.1,332.6"/><polygon points="648.3,326.2 670.1,335.6 670.1,332.6 648.3,323.2"/><polygon points="648.3,323.2 1043.0,247.1 1065.5,256.0 670.1,332.6"/></g><polyline fill="none" stroke="#009c90" stroke-width="0.9" points="648.3,326.2 670.1,335.6 1065.4,258.9"/><g fill="#d40000"><polygon points="905.0,290.0 1024.0,267.0 1024.0,264.1 905.0,287.1"/><polygon points="882.8,278.0 1001.6,255.0 1024.0,264.1 905.0,287.1"/></g><polyline fill="none" stroke="#a00000" stroke-width="0.9" points="905.0,290.0 1024.0,267.0"/><g fill="#00c8bb"><polygon points="670.6,332.5 1065.1,256.1 1065.1,253.2 670.6,329.6"/><polygon points="648.8,323.1 670.6,332.5 670.6,329.6 648.8,320.1"/><polygon points="648.8,320.1 1042.7,244.2 1065.1,253.2 670.6,329.6"/></g><polyline fill="none" stroke="#009c90" stroke-width="0.9" points="648.8,323.1 670.6,332.5 1065.1,256.1"/><g fill="#d40000"><polygon points="905.0,287.1 1042.0,260.6 1042.0,257.7 905.0,284.2"/><polygon points="882.8,275.0 1019.6,248.7 1042.0,257.7 905.0,284.2"/></g><polyline fill="none" stroke="#a00000" stroke-width="0.9" points="905.0,287.1 1042.0,260.6"/><g fill="#00c8bb"><polygon points="671.1,329.5 1064.8,253.3 1064.8,250.4 671.1,326.5"/><polygon points="649.4,320.0 671.1,329.5 671.1,326.5 649.3,317.1"/><polygon points="649.3,317.1 1042.4,241.4 1064.8,250.4 671.1,326.5"/></g><polyline fill="none" stroke="#009c90" stroke-width="0.9" points="649.4,320.0 671.1,329.5 1064.8,253.3"/><g fill="#c83c3c"><polygon points="905.0,284.2 1018.0,262.3 1018.0,259.4 905.0,281.3"/><polygon points="882.8,272.1 995.6,250.4 1018.0,259.4 905.0,281.3"/></g><polyline fill="none" stroke="#a02020" stroke-width="0.9" points="905.0,284.2 1018.0,262.3"/><g fill="#00c8bb"><polygon points="671.7,326.4 1064.3,250.5 1064.3,247.6 671.7,323.4"/><polygon points="649.9,317.0 671.7,326.4 671.7,323.4 649.9,314.0"/><polygon points="649.9,314.0 1041.9,238.6 1064.3,247.6 671.7,323.4"/></g><polyline fill="none" stroke="#009c90" stroke-width="0.9" points="649.9,317.0 671.7,326.4 1064.3,250.5"/><g fill="#d40000"><polygon points="905.0,281.3 1040.0,255.2 1040.0,252.3 905.0,278.3"/><polygon points="882.8,269.2 1017.6,243.3 1040.0,252.3 905.0,278.3"/></g><polyline fill="none" stroke="#a00000" stroke-width="0.9" points="905.0,281.3 1040.0,255.2"/><g fill="#00c8bb"><polygon points="672.2,323.3 1063.6,247.7 1063.6,244.8 672.2,320.3"/><polygon points="650.4,313.9 672.2,323.3 672.2,320.3 650.4,310.9"/><polygon points="650.4,310.9 1041.2,235.9 1063.6,244.8 672.2,320.3"/></g><polyline fill="none" stroke="#009c90" stroke-width="0.9" points="650.4,313.9 672.2,323.3 1063.6,247.7"/><g fill="#d40000"><polygon points="672.2,323.3 817.0,295.3 817.0,292.4 672.2,320.3"/><polygon points="650.4,313.9 672.2,323.3 672.2,320.3 650.4,310.9"/><polygon points="650.4,310.9 794.9,283.2 817.0,292.4 672.2,320.3"/></g><polyline fill="none" stroke="#a00000" stroke-width="0.9" points="650.4,313.9 672.2,323.3 817.0,295.3"/><g fill="#d40000"><polygon points="1061.0,248.2 1063.6,247.7 1063.6,244.8 1061.0,245.3"/><polygon points="1038.6,236.4 1041.2,235.9 1063.6,244.8 1061.0,245.3"/></g><polyline fill="none" stroke="#a00000" stroke-width="0.9" points="1061.0,248.2 1063.6,247.7"/><g fill="#00c8bb"><polygon points="672.8,320.2 1062.9,244.9 1062.9,242.0 672.8,317.3"/><polygon points="651.0,310.8 672.8,320.2 672.8,317.3 651.0,307.9"/><polygon points="651.0,307.9 1040.5,233.1 1062.9,242.0 672.8,317.3"/></g><polyline fill="none" stroke="#009c90" stroke-width="0.9" points="651.0,310.8 672.8,320.2 1062.9,244.9"/><g fill="#d40000"><polygon points="672.8,320.2 817.0,292.4 817.0,289.4 672.8,317.3"/><polygon points="651.0,310.8 672.8,320.2 672.8,317.3 651.0,307.9"/><polygon points="651.0,307.9 794.9,280.2 817.0,289.4 672.8,317.3"/></g><polyline fill="none" stroke="#a00000" stroke-width="0.9" points="651.0,310.8 672.8,320.2 817.0,292.4"/><g fill="#00c8bb"><polygon points="673.4,317.1 1062.2,242.2 1062.2,239.3 673.4,314.2"/><polygon points="651.6,307.7 673.4,317.1 673.4,314.2 651.6,304.8"/><polygon points="651.6,304.8 1039.8,230.4 1062.2,239.3 673.4,314.2"/></g><polyline fill="none" stroke="#009c90" stroke-width="0.9" points="651.6,307.7 673.4,317.1 1062.2,242.2"/><g fill="#d40000"><polygon points="673.4,317.1 817.0,289.5 817.0,286.5 673.4,314.2"/><polygon points="651.6,307.7 673.4,317.1 673.4,314.2 651.6,304.8"/><polygon points="651.6,304.8 794.9,277.3 817.0,286.5 673.4,314.2"/></g><polyline fill="none" stroke="#a00000" stroke-width="0.9" points="651.6,307.7 673.4,317.1 817.0,289.5"/><g fill="#00c8bb"><polygon points="674.2,314.0 1061.5,239.4 1061.5,236.5 674.2,311.0"/><polygon points="652.4,304.6 674.2,314.0 674.2,311.0 652.4,301.7"/><polygon points="652.4,301.7 1039.1,227.6 1061.5,236.5 674.2,311.0"/></g><polyline fill="none" stroke="#009c90" stroke-width="0.9" points="652.4,304.6 674.2,314.0 1061.5,239.4"/><g fill="#d40000"><polygon points="674.2,314.0 817.0,286.5 817.0,283.6 674.2,311.0"/><polygon points="652.4,304.6 674.2,314.0 674.2,311.0 652.4,301.7"/><polygon points="652.4,301.7 794.9,274.4 817.0,283.6 674.2,311.0"/></g><polyline fill="none" stroke="#a00000" stroke-width="0.9" points="652.4,304.6 674.2,314.0 817.0,286.5"/><g fill="#00c8bb"><polygon points="675.0,310.9 1060.8,236.7 1060.8,233.7 675.0,307.9"/><polygon points="653.1,301.5 675.0,310.9 675.0,307.9 653.1,298.5"/><polygon points="653.1,298.5 1038.4,224.9 1060.8,233.7 675.0,307.9"/></g><polyline fill="none" stroke="#009c90" stroke-width="0.9" points="653.1,301.5 675.0,310.9 1060.8,236.7"/><g fill="#d40000"><polygon points="890.0,269.5 1060.8,236.7 1060.8,233.7 890.0,266.6"/><polygon points="867.8,257.5 1038.4,224.9 1060.8,233.7 890.0,266.6"/></g><polyline fill="none" stroke="#a00000" stroke-width="0.9" points="890.0,269.5 1060.8,236.7"/><g fill="#00c8bb"><polygon points="675.7,307.8 1060.1,233.9 1060.1,231.0 675.7,304.8"/><polygon points="653.9,298.4 675.7,307.8 675.7,304.8 653.9,295.4"/><polygon points="653.9,295.4 1037.7,222.1 1060.1,231.0 675.7,304.8"/></g><polyline fill="none" stroke="#009c90" stroke-width="0.9" points="653.9,298.4 675.7,307.8 1060.1,233.9"/><g fill="#d40000"><polygon points="675.7,307.8 703.0,302.5 703.0,299.6 675.7,304.8"/><polygon points="653.9,298.4 675.7,307.8 675.7,304.8 653.9,295.4"/><polygon points="653.9,295.4 681.1,290.2 703.0,299.6 675.7,304.8"/></g><polyline fill="none" stroke="#a00000" stroke-width="0.9" points="653.9,298.4 675.7,307.8 703.0,302.5"/><g fill="#d40000"><polygon points="675.7,307.8 735.0,296.4 735.0,293.4 675.7,304.8"/><polygon points="653.9,298.4 675.7,307.8 675.7,304.8 653.9,295.4"/><polygon points="653.9,295.4 713.1,284.1 735.0,293.4 675.7,304.8"/></g><polyline fill="none" stroke="#a00000" stroke-width="0.9" points="653.9,298.4 675.7,307.8 735.0,296.4"/><g fill="#d40000"><polygon points="890.0,266.6 1060.1,233.9 1060.1,231.0 890.0,263.6"/><polygon points="867.8,254.6 1037.7,222.1 1060.1,231.0 890.0,263.6"/></g><polyline fill="none" stroke="#a00000" stroke-width="0.9" points="890.0,266.6 1060.1,233.9"/><g fill="#00c8bb"><polygon points="676.5,304.6 1059.4,231.1 1059.4,228.2 676.5,301.7"/><polygon points="654.7,295.3 676.5,304.6 676.5,301.7 654.7,292.3"/><polygon points="654.7,292.3 1037.0,219.3 1059.4,228.2 676.5,301.7"/></g><polyline fill="none" stroke="#009c90" stroke-width="0.9" points="654.7,295.3 676.5,304.6 1059.4,231.1"/><g fill="#d40000"><polygon points="676.5,304.6 703.0,299.6 703.0,296.6 676.5,301.7"/><polygon points="654.7,295.3 676.5,304.6 676.5,301.7 654.7,292.3"/><polygon points="654.7,292.3 681.1,287.3 703.0,296.6 676.5,301.7"/></g><polyline fill="none" stroke="#a00000" stroke-width="0.9" points="654.7,295.3 676.5,304.6 703.0,299.6"/><g fill="#d40000"><polygon points="890.0,263.7 1059.4,231.1 1059.4,228.2 890.0,260.7"/><polygon points="867.8,251.6 1037.0,219.3 1059.4,228.2 890.0,260.7"/></g><polyline fill="none" stroke="#a00000" stroke-width="0.9" points="890.0,263.7 1059.4,231.1"/><g fill="#00c8bb"><polygon points="677.5,301.5 1058.7,228.4 1058.7,225.5 677.5,298.5"/><polygon points="655.6,292.1 677.5,301.5 677.5,298.5 655.6,289.2"/><polygon points="655.6,289.2 1036.3,216.6 1058.7,225.5 677.5,298.5"/></g><polyline fill="none" stroke="#009c90" stroke-width="0.9" points="655.6,292.1 677.5,301.5 1058.7,228.4"/><g fill="#d40000"><polygon points="677.5,301.5 703.0,296.6 703.0,293.6 677.5,298.5"/><polygon points="655.6,292.1 677.5,301.5 677.5,298.5 655.6,289.2"/><polygon points="655.6,289.2 681.1,284.3 703.0,293.6 677.5,298.5"/></g><polyline fill="none" stroke="#a00000" stroke-width="0.9" points="655.6,292.1 677.5,301.5 703.0,296.6"/><g fill="#d40000"><polygon points="890.0,260.7 1058.7,228.4 1058.7,225.5 890.0,257.8"/><polygon points="867.8,248.7 1036.3,216.6 1058.7,225.5 890.0,257.8"/></g><polyline fill="none" stroke="#a00000" stroke-width="0.9" points="890.0,260.7 1058.7,228.4"/><g fill="#00c8bb"><polygon points="678.5,298.3 1057.5,225.7 1057.5,222.8 678.4,295.3"/><polygon points="656.6,289.0 678.5,298.3 678.4,295.3 656.6,286.0"/><polygon points="656.6,286.0 1035.1,213.9 1057.5,222.8 678.4,295.3"/></g><polyline fill="none" stroke="#009c90" stroke-width="0.9" points="656.6,289.0 678.5,298.3 1057.5,225.7"/><g fill="#d40000"><polygon points="678.5,298.3 703.0,293.6 703.0,290.6 678.4,295.3"/><polygon points="656.6,289.0 678.5,298.3 678.4,295.3 656.6,286.0"/><polygon points="656.6,286.0 681.1,281.3 703.0,290.6 678.4,295.3"/></g><polyline fill="none" stroke="#a00000" stroke-width="0.9" points="656.6,289.0 678.5,298.3 703.0,293.6"/><g fill="#d40000"><polygon points="890.0,257.8 1057.5,225.7 1057.5,222.8 890.0,254.8"/><polygon points="867.8,245.8 1035.1,213.9 1057.5,222.8 890.0,254.8"/></g><polyline fill="none" stroke="#a00000" stroke-width="0.9" points="890.0,257.8 1057.5,225.7"/><g fill="#00c8bb"><polygon points="679.4,295.2 1056.2,223.0 1056.2,220.1 679.4,292.2"/><polygon points="657.6,285.8 679.4,295.2 679.4,292.2 657.6,282.9"/><polygon points="657.6,282.9 1033.7,211.3 1056.2,220.1 679.4,292.2"/></g><polyline fill="none" stroke="#009c90" stroke-width="0.9" points="657.6,285.8 679.4,295.2 1056.2,223.0"/><g fill="#d40000"><polygon points="679.4,295.2 703.0,290.6 703.0,287.7 679.4,292.2"/><polygon points="657.6,285.8 679.4,295.2 679.4,292.2 657.6,282.9"/><polygon points="657.6,282.9 681.1,278.4 703.0,287.7 679.4,292.2"/></g><polyline fill="none" stroke="#a00000" stroke-width="0.9" points="657.6,285.8 679.4,295.2 703.0,290.6"/><g fill="#d40000"><polygon points="890.0,254.9 1056.2,223.0 1056.2,220.1 890.0,251.9"/><polygon points="867.8,242.8 1033.7,211.3 1056.2,220.1 890.0,251.9"/></g><polyline fill="none" stroke="#a00000" stroke-width="0.9" points="890.0,254.9 1056.2,223.0"/><g fill="#00c8bb"><polygon points="680.4,292.0 1054.9,220.4 1054.9,217.5 680.4,289.0"/><polygon points="658.6,282.7 680.4,292.0 680.4,289.0 658.6,279.7"/><polygon points="658.6,279.7 1032.4,208.6 1054.9,217.5 680.4,289.0"/></g><polyline fill="none" stroke="#009c90" stroke-width="0.9" points="658.6,282.7 680.4,292.0 1054.9,220.4"/><g fill="#d40000"><polygon points="680.4,292.0 703.0,287.7 703.0,284.7 680.4,289.0"/><polygon points="658.6,282.7 680.4,292.0 680.4,289.0 658.6,279.7"/><polygon points="658.6,279.7 681.1,275.4 703.0,284.7 680.4,289.0"/></g><polyline fill="none" stroke="#a00000" stroke-width="0.9" points="658.6,282.7 680.4,292.0 703.0,287.7"/><g fill="#d40000"><polygon points="680.4,292.0 735.0,281.6 735.0,278.6 680.4,289.0"/><polygon points="658.6,282.7 680.4,292.0 680.4,289.0 658.6,279.7"/><polygon points="658.6,279.7 713.1,269.3 735.0,278.6 680.4,289.0"/></g><polyline fill="none" stroke="#a00000" stroke-width="0.9" points="658.6,282.7 680.4,292.0 735.0,281.6"/><g fill="#d40000"><polygon points="890.0,251.9 1054.9,220.4 1054.9,217.5 890.0,249.0"/><polygon points="867.8,239.9 1032.4,208.6 1054.9,217.5 890.0,249.0"/></g><polyline fill="none" stroke="#a00000" stroke-width="0.9" points="890.0,251.9 1054.9,220.4"/><g fill="#00c8bb"><polygon points="681.4,288.8 1053.5,217.7 1053.6,214.8 681.4,285.8"/><polygon points="659.5,279.5 681.4,288.8 681.4,285.8 659.5,276.5"/><polygon points="659.5,276.5 1031.1,206.0 1053.6,214.8 681.4,285.8"/></g><polyline fill="none" stroke="#009c90" stroke-width="0.9" points="659.5,279.5 681.4,288.8 1053.5,217.7"/><g fill="#d40000"><polygon points="681.4,288.8 703.0,284.7 703.0,281.7 681.4,285.8"/><polygon points="659.5,279.5 681.4,288.8 681.4,285.8 659.5,276.5"/><polygon points="659.5,276.5 681.1,272.4 703.0,281.7 681.4,285.8"/></g><polyline fill="none" stroke="#a00000" stroke-width="0.9" points="659.5,279.5 681.4,288.8 703.0,284.7"/><g fill="#00c8bb"><polygon points="682.4,285.7 1052.2,215.1 1052.2,212.2 682.4,282.7"/><polygon points="660.5,276.4 682.4,285.7 682.4,282.7 660.5,273.4"/><polygon points="660.5,273.4 1029.8,203.3 1052.2,212.2 682.4,282.7"/></g><polyline fill="none" stroke="#009c90" stroke-width="0.9" points="660.5,276.4 682.4,285.7 1052.2,215.1"/><g fill="#d40000"><polygon points="682.4,285.7 703.0,281.7 703.0,278.8 682.4,282.7"/><polygon points="660.5,276.4 682.4,285.7 682.4,282.7 660.5,273.4"/><polygon points="660.5,273.4 681.1,269.5 703.0,278.8 682.4,282.7"/></g><polyline fill="none" stroke="#a00000" stroke-width="0.9" points="660.5,276.4 682.4,285.7 703.0,281.7"/><g fill="#00c8bb"><polygon points="683.4,282.5 1050.9,212.4 1050.9,209.5 683.4,279.5"/><polygon points="661.5,273.2 683.4,282.5 683.4,279.5 661.5,270.2"/><polygon points="661.5,270.2 1028.4,200.7 1050.9,209.5 683.4,279.5"/></g><polyline fill="none" stroke="#009c90" stroke-width="0.9" points="661.5,273.2 683.4,282.5 1050.9,212.4"/><g fill="#d40000"><polygon points="683.4,282.5 703.0,278.8 703.0,275.8 683.4,279.5"/><polygon points="661.5,273.2 683.4,282.5 683.4,279.5 661.5,270.2"/><polygon points="661.5,270.2 681.1,266.5 703.0,275.8 683.4,279.5"/></g><polyline fill="none" stroke="#a00000" stroke-width="0.9" points="661.5,273.2 683.4,282.5 703.0,278.8"/><g fill="#00c8bb"><polygon points="684.5,279.3 1049.6,209.8 1049.6,206.9 684.5,276.3"/><polygon points="662.7,270.0 684.5,279.3 684.5,276.3 662.7,267.0"/><polygon points="662.7,267.0 1027.1,198.0 1049.6,206.9 684.5,276.3"/></g><polyline fill="none" stroke="#009c90" stroke-width="0.9" points="662.7,270.0 684.5,279.3 1049.6,209.8"/><g fill="#d40000"><polygon points="684.5,279.3 703.0,275.8 703.0,272.8 684.5,276.3"/><polygon points="662.7,270.0 684.5,279.3 684.5,276.3 662.7,267.0"/><polygon points="662.7,267.0 681.1,263.6 703.0,272.8 684.5,276.3"/></g><polyline fill="none" stroke="#a00000" stroke-width="0.9" points="662.7,270.0 684.5,279.3 703.0,275.8"/><g fill="#00c8bb"><polygon points="685.7,276.1 1048.2,207.1 1048.3,204.2 685.7,273.1"/><polygon points="663.8,266.8 685.7,276.1 685.7,273.1 663.8,263.9"/><polygon points="663.8,263.9 1025.8,195.4 1048.3,204.2 685.7,273.1"/></g><polyline fill="none" stroke="#009c90" stroke-width="0.9" points="663.8,266.8 685.7,276.1 1048.2,207.1"/><g fill="#d40000"><polygon points="685.7,276.1 703.0,272.8 703.0,269.8 685.7,273.1"/><polygon points="663.8,266.8 685.7,276.1 685.7,273.1 663.8,263.9"/><polygon points="663.8,263.9 681.1,260.6 703.0,269.8 685.7,273.1"/></g><polyline fill="none" stroke="#a00000" stroke-width="0.9" points="663.8,266.8 685.7,276.1 703.0,272.8"/><g fill="#00c8bb"><polygon points="686.8,272.9 1046.9,204.5 1046.9,201.6 686.8,269.9"/><polygon points="665.0,263.6 686.8,272.9 686.8,269.9 665.0,260.7"/><polygon points="665.0,260.7 1024.5,192.8 1046.9,201.6 686.8,269.9"/></g><polyline fill="none" stroke="#009c90" stroke-width="0.9" points="665.0,263.6 686.8,272.9 1046.9,204.5"/><g fill="#00c8bb"><polygon points="688.0,269.7 1045.4,201.9 1045.4,198.9 688.0,266.7"/><polygon points="666.1,260.4 688.0,269.7 688.0,266.7 666.1,257.5"/><polygon points="666.1,257.5 1022.9,190.1 1045.4,198.9 688.0,266.7"/></g><polyline fill="none" stroke="#009c90" stroke-width="0.9" points="666.1,260.4 688.0,269.7 1045.4,201.9"/><g fill="#00c8bb"><polygon points="689.1,266.5 1043.8,199.3 1043.8,196.3 689.1,263.5"/><polygon points="667.3,257.3 689.1,266.5 689.1,263.5 667.3,254.3"/><polygon points="667.3,254.3 1021.3,187.5 1043.8,196.3 689.1,263.5"/></g><polyline fill="none" stroke="#009c90" stroke-width="0.9" points="667.3,257.3 689.1,266.5 1043.8,199.3"/><g fill="#00c8bb"><polygon points="690.4,263.3 1042.1,196.7 1042.1,193.7 690.4,260.3"/><polygon points="668.5,254.1 690.4,263.3 690.4,260.3 668.5,251.1"/><polygon points="668.5,251.1 1019.7,185.0 1042.1,193.7 690.4,260.3"/></g><polyline fill="none" stroke="#009c90" stroke-width="0.9" points="668.5,254.1 690.4,263.3 1042.1,196.7"/><g fill="#d40000"><polygon points="690.4,263.3 868.0,229.6 868.0,226.7 690.4,260.3"/><polygon points="668.5,254.1 690.4,263.3 690.4,260.3 668.5,251.1"/><polygon points="668.5,251.1 845.8,217.7 868.0,226.7 690.4,260.3"/></g><polyline fill="none" stroke="#a00000" stroke-width="0.9" points="668.5,254.1 690.4,263.3 868.0,229.6"/><g fill="#00c8bb"><polygon points="691.7,260.1 1040.5,194.1 1040.5,191.1 691.7,257.1"/><polygon points="669.9,250.8 691.7,260.1 691.7,257.1 669.9,247.9"/><polygon points="669.9,247.9 1018.1,182.4 1040.5,191.1 691.7,257.1"/></g><polyline fill="none" stroke="#009c90" stroke-width="0.9" points="669.9,250.8 691.7,260.1 1040.5,194.1"/><g fill="#00c8bb"><polygon points="693.1,256.8 1038.9,191.5 1038.9,188.5 693.1,253.8"/><polygon points="671.2,247.6 693.1,256.8 693.1,253.8 671.2,244.6"/><polygon points="671.2,244.6 1016.4,179.8 1038.9,188.5 693.1,253.8"/></g><polyline fill="none" stroke="#009c90" stroke-width="0.9" points="671.2,247.6 693.1,256.8 1038.9,191.5"/><g fill="#d40000"><polygon points="693.1,256.8 871.6,223.1 871.6,220.1 693.1,253.8"/><polygon points="671.2,247.6 693.1,256.8 693.1,253.8 671.2,244.6"/><polygon points="671.2,244.6 849.4,211.1 871.6,220.1 693.1,253.8"/></g><polyline fill="none" stroke="#a00000" stroke-width="0.9" points="671.2,247.6 693.1,256.8 871.6,223.1"/><g fill="#d40000"><polygon points="1028.0,193.5 1038.9,191.5 1038.9,188.5 1028.0,190.6"/><polygon points="1005.6,181.8 1016.4,179.8 1038.9,188.5 1028.0,190.6"/></g><polyline fill="none" stroke="#a00000" stroke-width="0.9" points="1028.0,193.5 1038.9,191.5"/><g fill="#00c8bb"><polygon points="694.4,253.6 1037.2,188.9 1037.3,185.9 694.4,250.6"/><polygon points="672.6,244.4 694.4,253.6 694.4,250.6 672.5,241.4"/><polygon points="672.5,241.4 1014.8,177.2 1037.3,185.9 694.4,250.6"/></g><polyline fill="none" stroke="#009c90" stroke-width="0.9" points="672.6,244.4 694.4,253.6 1037.2,188.9"/><g fill="#00c8bb"><polygon points="695.8,250.3 1035.6,186.3 1035.6,183.3 695.8,247.4"/><polygon points="673.9,241.2 695.8,250.3 695.8,247.4 673.9,238.2"/><polygon points="673.9,238.2 1013.2,174.6 1035.6,183.3 695.8,247.4"/></g><polyline fill="none" stroke="#009c90" stroke-width="0.9" points="673.9,241.2 695.8,250.3 1035.6,186.3"/><g fill="#d40000"><polygon points="1028.0,187.7 1035.6,186.3 1035.6,183.3 1028.0,184.8"/><polygon points="1005.6,176.0 1013.2,174.6 1035.6,183.3 1028.0,184.8"/></g><polyline fill="none" stroke="#a00000" stroke-width="0.9" points="1028.0,187.7 1035.6,186.3"/><g fill="#00c8bb"><polygon points="697.4,247.1 1034.0,183.6 1034.0,180.7 697.4,244.1"/><polygon points="675.5,237.9 697.4,247.1 697.4,244.1 675.5,234.9"/><polygon points="675.5,234.9 1011.5,172.0 1034.0,180.7 697.4,244.1"/></g><polyline fill="none" stroke="#009c90" stroke-width="0.9" points="675.5,237.9 697.4,247.1 1034.0,183.6"/><g fill="#d40000"><polygon points="697.4,247.1 875.0,213.6 875.0,210.6 697.4,244.1"/><polygon points="675.5,237.9 697.4,247.1 697.4,244.1 675.5,234.9"/><polygon points="675.5,234.9 852.8,201.7 875.0,210.6 697.4,244.1"/></g><polyline fill="none" stroke="#a00000" stroke-width="0.9" points="675.5,237.9 697.4,247.1 875.0,213.6"/><g fill="#d40000"><polygon points="1028.0,184.8 1034.0,183.6 1034.0,180.7 1028.0,181.9"/><polygon points="1005.6,173.1 1011.5,172.0 1034.0,180.7 1028.0,181.9"/></g><polyline fill="none" stroke="#a00000" stroke-width="0.9" points="1028.0,184.8 1034.0,183.6"/><g fill="#00c8bb"><polygon points="699.2,243.7 1032.3,181.0 1032.4,178.1 699.2,240.8"/><polygon points="677.3,234.6 699.2,243.7 699.2,240.8 677.2,231.6"/><polygon points="677.2,231.6 1009.9,169.4 1032.4,178.1 699.2,240.8"/></g><polyline fill="none" stroke="#009c90" stroke-width="0.9" points="677.3,234.6 699.2,243.7 1032.3,181.0"/><g fill="#00c8bb"><polygon points="700.9,240.4 1030.6,178.5 1030.6,175.5 700.9,237.5"/><polygon points="679.0,231.3 700.9,240.4 700.9,237.5 679.0,228.3"/><polygon points="679.0,228.3 1008.1,166.8 1030.6,175.5 700.9,237.5"/></g><polyline fill="none" stroke="#009c90" stroke-width="0.9" points="679.0,231.3 700.9,240.4 1030.6,178.5"/><g fill="#d40000"><polygon points="1028.0,178.9 1030.6,178.5 1030.6,175.5 1028.0,176.0"/><polygon points="1005.6,167.3 1008.1,166.8 1030.6,175.5 1028.0,176.0"/></g><polyline fill="none" stroke="#a00000" stroke-width="0.9" points="1028.0,178.9 1030.6,178.5"/><g fill="#00c8bb"><polygon points="702.7,237.1 1028.6,175.9 1028.6,173.0 702.7,234.1"/><polygon points="680.8,228.0 702.7,237.1 702.7,234.1 680.8,225.0"/><polygon points="680.8,225.0 1006.1,164.2 1028.6,173.0 702.7,234.1"/></g><polyline fill="none" stroke="#009c90" stroke-width="0.9" points="680.8,228.0 702.7,237.1 1028.6,175.9"/><g fill="#00c8bb"><polygon points="704.5,233.8 1026.6,173.4 1026.6,170.4 704.5,230.8"/><polygon points="682.6,224.7 704.5,233.8 704.5,230.8 682.6,221.7"/><polygon points="682.6,221.7 1004.2,161.7 1026.6,170.4 704.5,230.8"/></g><polyline fill="none" stroke="#009c90" stroke-width="0.9" points="682.6,224.7 704.5,233.8 1026.6,173.4"/><g fill="#d40000"><polygon points="704.5,233.8 884.0,200.1 884.0,197.2 704.5,230.8"/><polygon points="682.6,224.7 704.5,233.8 704.5,230.8 682.6,221.7"/><polygon points="682.6,221.7 861.8,188.3 884.0,197.2 704.5,230.8"/></g><polyline fill="none" stroke="#a00000" stroke-width="0.9" points="682.6,224.7 704.5,233.8 884.0,200.1"/><g fill="#00c8bb"><polygon points="706.4,230.5 1024.6,170.8 1024.7,167.9 706.4,227.5"/><polygon points="684.5,221.3 706.4,230.5 706.4,227.5 684.5,218.4"/><polygon points="684.5,218.4 1002.2,159.2 1024.7,167.9 706.4,227.5"/></g><polyline fill="none" stroke="#009c90" stroke-width="0.9" points="684.5,221.3 706.4,230.5 1024.6,170.8"/><g fill="#d40000"><polygon points="706.4,230.5 884.0,197.2 884.0,194.2 706.4,227.5"/><polygon points="684.5,221.3 706.4,230.5 706.4,227.5 684.5,218.4"/><polygon points="684.5,218.4 861.8,185.3 884.0,194.2 706.4,227.5"/></g><polyline fill="none" stroke="#a00000" stroke-width="0.9" points="684.5,221.3 706.4,230.5 884.0,197.2"/><g fill="#00c8bb"><polygon points="708.7,227.0 1022.7,168.3 1022.7,165.3 708.7,224.1"/><polygon points="686.8,217.9 708.7,227.0 708.7,224.1 686.8,215.0"/><polygon points="686.8,215.0 1000.2,156.6 1022.7,165.3 708.7,224.1"/></g><polyline fill="none" stroke="#009c90" stroke-width="0.9" points="686.8,217.9 708.7,227.0 1022.7,168.3"/><g fill="#d40000"><polygon points="708.7,227.0 929.0,185.8 929.0,182.9 708.7,224.1"/><polygon points="686.8,217.9 708.7,227.0 708.7,224.1 686.8,215.0"/><polygon points="686.8,215.0 906.7,174.0 929.0,182.9 708.7,224.1"/></g><polyline fill="none" stroke="#a00000" stroke-width="0.9" points="686.8,217.9 708.7,227.0 929.0,185.8"/><g fill="#00c8bb"><polygon points="711.0,223.6 1020.7,165.7 1020.7,162.8 711.0,220.7"/><polygon points="689.0,214.5 711.0,223.6 711.0,220.7 689.0,211.6"/><polygon points="689.0,211.6 998.2,154.1 1020.7,162.8 711.0,220.7"/></g><polyline fill="none" stroke="#009c90" stroke-width="0.9" points="689.0,214.5 711.0,223.6 1020.7,165.7"/><g fill="#00c8bb"><polygon points="713.2,220.2 1018.7,163.2 1018.7,160.2 713.2,217.3"/><polygon points="691.3,211.1 713.2,220.2 713.2,217.3 691.3,208.2"/><polygon points="691.3,208.2 996.3,151.5 1018.7,160.2 713.2,217.3"/></g><polyline fill="none" stroke="#009c90" stroke-width="0.9" points="691.3,211.1 713.2,220.2 1018.7,163.2"/><g fill="#d40000"><polygon points="713.2,220.2 893.0,186.7 893.0,183.7 713.2,217.3"/><polygon points="691.3,211.1 713.2,220.2 713.2,217.3 691.3,208.2"/><polygon points="691.3,208.2 870.8,174.8 893.0,183.7 713.2,217.3"/></g><polyline fill="none" stroke="#a00000" stroke-width="0.9" points="691.3,211.1 713.2,220.2 893.0,186.7"/><g fill="#00c8bb"><polygon points="715.5,216.8 1016.7,160.6 1016.7,157.7 715.5,213.8"/><polygon points="693.6,207.7 715.5,216.8 715.5,213.8 693.6,204.8"/><polygon points="693.6,204.8 994.3,149.0 1016.7,157.7 715.5,213.8"/></g><polyline fill="none" stroke="#009c90" stroke-width="0.9" points="693.6,207.7 715.5,216.8 1016.7,160.6"/><g fill="#c83c3c"><polygon points="715.5,216.8 893.0,183.7 893.0,180.8 715.5,213.8"/><polygon points="693.6,207.7 715.5,216.8 715.5,213.8 693.6,204.8"/><polygon points="693.6,204.8 870.8,171.9 893.0,180.8 715.5,213.8"/></g><polyline fill="none" stroke="#a02020" stroke-width="0.9" points="693.6,207.7 715.5,216.8 893.0,183.7"/><polygon fill="#18cc44" points="697.3,205.5 995.5,150.2 1013.0,157.0 714.4,212.6"/><g fill="#00c8bb"><polygon points="718.4,213.3 1014.7,158.1 1014.8,155.1 718.4,210.3"/><polygon points="696.5,204.2 718.4,213.3 718.4,210.3 696.4,201.3"/><polygon points="696.4,201.3 992.3,146.4 1014.8,155.1 718.4,210.3"/></g><polyline fill="none" stroke="#009c90" stroke-width="0.9" points="696.5,204.2 718.4,213.3 1014.7,158.1"/><g fill="#c83c3c"><polygon points="718.4,213.3 893.0,180.8 893.0,177.8 718.4,210.3"/><polygon points="696.5,204.2 718.4,213.3 718.4,210.3 696.4,201.3"/><polygon points="696.4,201.3 870.8,169.0 893.0,177.8 718.4,210.3"/></g><polyline fill="none" stroke="#a02020" stroke-width="0.9" points="696.5,204.2 718.4,213.3 893.0,180.8"/><polygon fill="#18cc44" points="700.1,202.0 993.5,147.6 1011.1,154.4 717.3,209.1"/><g fill="#00c8bb"><polygon points="721.7,209.7 1012.8,155.5 1012.8,152.6 721.7,206.7"/><polygon points="699.7,200.7 721.7,209.7 721.7,206.7 699.7,197.7"/><polygon points="699.7,197.7 990.3,143.9 1012.8,152.6 721.7,206.7"/></g><polyline fill="none" stroke="#009c90" stroke-width="0.9" points="699.7,200.7 721.7,209.7 1012.8,155.5"/><g fill="#c83c3c"><polygon points="896.0,177.3 940.0,169.1 940.0,166.1 896.0,174.3"/><polygon points="873.7,165.5 917.7,157.3 940.0,166.1 896.0,174.3"/></g><polyline fill="none" stroke="#a02020" stroke-width="0.9" points="896.0,177.3 940.0,169.1"/><polygon fill="#18cc44" points="703.4,198.4 991.5,145.1 1009.1,151.9 720.5,205.5"/><g fill="#00c8bb"><polygon points="724.9,206.1 1010.8,153.0 1010.8,150.0 724.9,203.1"/><polygon points="702.9,197.1 724.9,206.1 724.9,203.1 702.9,194.1"/><polygon points="702.9,194.1 988.3,141.3 1010.8,150.0 724.9,203.1"/></g><polyline fill="none" stroke="#009c90" stroke-width="0.9" points="702.9,197.1 724.9,206.1 1010.8,153.0"/><g fill="#d40000"><polygon points="997.0,155.5 1010.8,153.0 1010.8,150.0 997.0,152.6"/><polygon points="974.6,143.9 988.3,141.3 1010.8,150.0 997.0,152.6"/></g><polyline fill="none" stroke="#a00000" stroke-width="0.9" points="997.0,155.5 1010.8,153.0"/><polygon fill="#18cc44" points="706.6,194.9 989.6,142.5 1007.1,149.3 723.8,201.9"/><g fill="#00c8bb"><polygon points="728.2,202.5 1008.4,150.5 1008.4,147.5 728.2,199.6"/><polygon points="706.2,193.5 728.2,202.5 728.2,199.6 706.2,190.5"/><polygon points="706.2,190.5 986.0,138.8 1008.4,147.5 728.2,199.6"/></g><polyline fill="none" stroke="#009c90" stroke-width="0.9" points="706.2,193.5 728.2,202.5 1008.4,150.5"/><polygon fill="#18cc44" points="709.9,191.3 987.2,140.0 1004.7,146.8 727.1,198.3"/><g fill="#00c8bb"><polygon points="731.1,199.0 1006.0,148.0 1006.0,145.1 731.1,196.0"/><polygon points="709.1,190.0 731.1,199.0 731.1,196.0 709.1,187.0"/><polygon points="709.1,187.0 983.5,136.4 1006.0,145.1 731.1,196.0"/></g><polyline fill="none" stroke="#009c90" stroke-width="0.9" points="709.1,190.0 731.1,199.0 1006.0,148.0"/><g fill="#d40000"><polygon points="997.0,149.7 1006.0,148.0 1006.0,145.1 997.0,146.7"/><polygon points="974.6,138.0 983.5,136.4 1006.0,145.1 997.0,146.7"/></g><polyline fill="none" stroke="#a00000" stroke-width="0.9" points="997.0,149.7 1006.0,148.0"/><polygon fill="#18cc44" points="712.8,187.8 984.7,137.6 1002.3,144.3 730.0,194.8"/><g fill="#00c8bb"><polygon points="733.7,195.6 1003.5,145.5 1003.5,142.6 733.7,192.6"/><polygon points="711.7,186.5 733.7,195.6 733.7,192.6 711.7,183.6"/><polygon points="711.7,183.6 981.1,133.9 1003.5,142.6 733.7,192.6"/></g><polyline fill="none" stroke="#009c90" stroke-width="0.9" points="711.7,186.5 733.7,195.6 1003.5,145.5"/><g fill="#d40000"><polygon points="997.0,146.7 1003.5,145.5 1003.5,142.6 997.0,143.8"/><polygon points="974.6,135.1 981.1,133.9 1003.5,142.6 997.0,143.8"/></g><polyline fill="none" stroke="#a00000" stroke-width="0.9" points="997.0,146.7 1003.5,145.5"/><polygon fill="#18cc44" points="715.4,184.3 982.3,135.1 999.8,141.9 732.6,191.3"/><g fill="#00c8bb"><polygon points="736.3,192.1 1001.0,143.1 1001.0,140.1 736.3,189.1"/><polygon points="714.3,183.1 736.3,192.1 736.3,189.1 714.3,180.1"/><polygon points="714.3,180.1 978.6,131.4 1001.0,140.1 736.3,189.1"/></g><polyline fill="none" stroke="#009c90" stroke-width="0.9" points="714.3,183.1 736.3,192.1 1001.0,143.1"/><g fill="#d40000"><polygon points="997.0,143.8 1001.0,143.1 1001.0,140.1 997.0,140.9"/><polygon points="974.6,132.2 978.6,131.4 1001.0,140.1 997.0,140.9"/></g><polyline fill="none" stroke="#a00000" stroke-width="0.9" points="997.0,143.8 1001.0,143.1"/><polygon fill="#18cc44" points="718.0,180.9 979.8,132.6 997.3,139.4 735.2,187.9"/><g fill="#00c8bb"><polygon points="738.9,188.6 998.5,140.6 998.6,137.6 738.9,185.6"/><polygon points="716.9,179.6 738.9,188.6 738.9,185.6 716.9,176.7"/><polygon points="716.9,176.7 976.1,129.0 998.6,137.6 738.9,185.6"/></g><polyline fill="none" stroke="#009c90" stroke-width="0.9" points="716.9,179.6 738.9,188.6 998.5,140.6"/><polygon fill="#18cc44" points="720.6,177.4 977.3,130.2 994.8,136.9 737.8,184.4"/><g fill="#00c8bb"><polygon points="741.5,185.2 996.1,138.1 996.1,135.2 741.5,182.2"/><polygon points="719.5,176.2 741.5,185.2 741.5,182.2 719.5,173.2"/><polygon points="719.5,173.2 973.6,126.5 996.1,135.2 741.5,182.2"/></g><polyline fill="none" stroke="#009c90" stroke-width="0.9" points="719.5,176.2 741.5,185.2 996.1,138.1"/><g fill="#d40000"><polygon points="759.0,181.9 963.6,144.1 963.6,141.2 759.0,178.9"/><polygon points="737.0,170.0 941.2,132.5 963.6,141.2 759.0,178.9"/></g><polyline fill="none" stroke="#a00000" stroke-width="0.9" points="759.0,181.9 963.6,144.1"/><polygon fill="#18cc44" points="723.2,174.0 974.8,127.7 992.4,134.5 740.4,180.9"/><g fill="#00c8bb"><polygon points="745.1,181.5 993.6,135.6 993.6,132.7 745.1,178.5"/><polygon points="723.1,172.5 745.1,181.5 745.1,178.5 723.1,169.6"/><polygon points="723.1,169.6 971.2,124.0 993.6,132.7 745.1,178.5"/></g><polyline fill="none" stroke="#009c90" stroke-width="0.9" points="723.1,172.5 745.1,181.5 993.6,135.6"/><polygon fill="#18cc44" points="726.8,170.3 972.4,125.2 989.9,132.0 744.0,177.3"/><g fill="#00c8bb"><polygon points="748.8,177.8 990.6,133.3 990.6,130.3 748.8,174.9"/><polygon points="726.8,168.9 748.8,177.8 748.8,174.9 726.8,165.9"/><polygon points="726.8,165.9 968.1,121.7 990.6,130.3 748.8,174.9"/></g><polyline fill="none" stroke="#009c90" stroke-width="0.9" points="726.8,168.9 748.8,177.8 990.6,133.3"/><polygon fill="#18cc44" points="730.5,166.7 969.3,122.8 986.9,129.6 747.7,173.6"/><g fill="#00c8bb"><polygon points="752.5,174.2 986.8,131.0 986.8,128.1 752.5,171.2"/><polygon points="730.4,165.3 752.5,174.2 752.5,171.2 730.4,162.3"/><polygon points="730.4,162.3 964.4,119.4 986.8,128.1 752.5,171.2"/></g><polyline fill="none" stroke="#009c90" stroke-width="0.9" points="730.4,165.3 752.5,174.2 986.8,131.0"/><g fill="#d40000"><polygon points="962.0,135.6 986.8,131.0 986.8,128.1 962.0,132.6"/><polygon points="939.6,124.0 964.4,119.4 986.8,128.1 962.0,132.6"/></g><polyline fill="none" stroke="#a00000" stroke-width="0.9" points="962.0,135.6 986.8,131.0"/><polygon fill="#18cc44" points="734.1,163.0 965.6,120.6 983.1,127.4 751.3,170.0"/><g fill="#00c8bb"><polygon points="756.1,170.5 983.1,128.8 983.1,125.8 756.1,167.6"/><polygon points="734.1,161.6 756.1,170.5 756.1,167.6 734.1,158.6"/><polygon points="734.1,158.6 960.6,117.2 983.1,125.8 756.1,167.6"/></g><polyline fill="none" stroke="#009c90" stroke-width="0.9" points="734.1,161.6 756.1,170.5 983.1,128.8"/><g fill="#d40000"><polygon points="962.0,132.6 983.1,128.8 983.1,125.8 962.0,129.7"/><polygon points="939.6,121.0 960.6,117.2 983.1,125.8 962.0,129.7"/></g><polyline fill="none" stroke="#a00000" stroke-width="0.9" points="962.0,132.6 983.1,128.8"/><polygon fill="#18cc44" points="737.7,159.4 961.8,118.4 979.4,125.1 755.0,166.3"/><g fill="#00c8bb"><polygon points="759.7,166.9 979.3,126.5 979.3,123.6 759.7,163.9"/><polygon points="737.7,158.0 759.7,166.9 759.7,163.9 737.7,155.0"/><polygon points="737.7,155.0 956.9,114.9 979.3,123.6 759.7,163.9"/></g><polyline fill="none" stroke="#009c90" stroke-width="0.9" points="737.7,158.0 759.7,166.9 979.3,126.5"/><g fill="#d40000"><polygon points="962.0,129.7 979.3,126.5 979.3,123.6 962.0,126.8"/><polygon points="939.6,118.1 956.9,114.9 979.3,123.6 962.0,126.8"/></g><polyline fill="none" stroke="#a00000" stroke-width="0.9" points="962.0,129.7 979.3,126.5"/><polygon fill="#18cc44" points="741.3,155.8 958.1,116.1 975.6,122.9 758.6,162.7"/><g fill="#00c8bb"><polygon points="763.3,163.2 975.5,124.3 975.6,121.3 763.3,160.3"/><polygon points="741.2,154.4 763.3,163.2 763.3,160.3 741.2,151.4"/><polygon points="741.2,151.4 953.1,112.7 975.6,121.3 763.3,160.3"/></g><polyline fill="none" stroke="#009c90" stroke-width="0.9" points="741.2,154.4 763.3,163.2 975.5,124.3"/><g fill="#d40000"><polygon points="763.3,163.2 905.0,137.2 905.0,134.3 763.3,160.3"/><polygon points="741.2,154.4 763.3,163.2 763.3,160.3 741.2,151.4"/><polygon points="741.2,151.4 882.7,125.6 905.0,134.3 763.3,160.3"/></g><polyline fill="none" stroke="#a00000" stroke-width="0.9" points="741.2,154.4 763.3,163.2 905.0,137.2"/><polygon fill="#18cc44" points="744.9,152.1 954.3,113.9 971.9,120.6 762.2,159.1"/><g fill="#00c8bb"><polygon points="766.9,159.6 971.8,122.0 971.8,119.1 766.9,156.6"/><polygon points="744.8,150.7 766.9,159.6 766.9,156.6 744.8,147.8"/><polygon points="744.8,147.8 949.4,110.5 971.8,119.1 766.9,156.6"/></g><polyline fill="none" stroke="#009c90" stroke-width="0.9" points="744.8,150.7 766.9,159.6 971.8,122.0"/><g fill="#d40000"><polygon points="962.0,123.8 971.8,122.0 971.8,119.1 962.0,120.9"/><polygon points="939.6,112.2 949.4,110.5 971.8,119.1 962.0,120.9"/></g><polyline fill="none" stroke="#a00000" stroke-width="0.9" points="962.0,123.8 971.8,122.0"/><polygon fill="#18cc44" points="748.5,148.5 950.6,111.6 968.1,118.4 765.8,155.4"/><g fill="#00c8bb"><polygon points="771.1,155.9 968.0,119.8 968.0,116.8 771.1,152.9"/><polygon points="749.1,147.0 771.1,155.9 771.1,152.9 749.1,144.0"/><polygon points="749.1,144.0 945.6,108.2 968.0,116.8 771.1,152.9"/></g><polyline fill="none" stroke="#009c90" stroke-width="0.9" points="749.1,147.0 771.1,155.9 968.0,119.8"/><g fill="#d40000"><polygon points="771.1,155.9 944.0,124.2 944.0,121.2 771.1,152.9"/><polygon points="749.1,147.0 771.1,155.9 771.1,152.9 749.1,144.0"/><polygon points="749.1,144.0 921.6,112.6 944.0,121.2 771.1,152.9"/></g><polyline fill="none" stroke="#a00000" stroke-width="0.9" points="749.1,147.0 771.1,155.9 944.0,124.2"/><g fill="#c83c3c"><polygon points="771.1,155.9 905.0,131.3 905.0,128.4 771.1,152.9"/><polygon points="749.1,147.0 771.1,155.9 771.1,152.9 749.1,144.0"/><polygon points="749.1,144.0 882.7,119.7 905.0,128.4 771.1,152.9"/></g><polyline fill="none" stroke="#a02020" stroke-width="0.9" points="749.1,147.0 771.1,155.9 905.0,131.3"/><g fill="#d40000"><polygon points="962.0,120.9 968.0,119.8 968.0,116.8 962.0,117.9"/><polygon points="939.6,109.3 945.6,108.2 968.0,116.8 962.0,117.9"/></g><polyline fill="none" stroke="#a00000" stroke-width="0.9" points="962.0,120.9 968.0,119.8"/><polygon fill="#18cc44" points="752.8,144.7 946.8,109.4 964.3,116.1 770.0,151.7"/><g fill="#00c8bb"><polygon points="775.4,152.1 964.3,117.5 964.3,114.6 775.4,149.1"/><polygon points="753.3,143.2 775.4,152.1 775.4,149.1 753.3,140.3"/><polygon points="753.3,140.3 941.9,106.0 964.3,114.6 775.4,149.1"/></g><polyline fill="none" stroke="#009c90" stroke-width="0.9" points="753.3,143.2 775.4,152.1 964.3,117.5"/><g fill="#d40000"><polygon points="775.4,152.1 944.0,121.2 944.0,118.3 775.4,149.1"/><polygon points="753.3,143.2 775.4,152.1 775.4,149.1 753.3,140.3"/><polygon points="753.3,140.3 921.6,109.6 944.0,118.3 775.4,149.1"/></g><polyline fill="none" stroke="#a00000" stroke-width="0.9" points="753.3,143.2 775.4,152.1 944.0,121.2"/><g fill="#d40000"><polygon points="775.4,152.1 905.0,128.4 905.0,125.4 775.4,149.1"/><polygon points="753.3,143.2 775.4,152.1 775.4,149.1 753.3,140.3"/><polygon points="753.3,140.3 882.7,116.7 905.0,125.4 775.4,149.1"/></g><polyline fill="none" stroke="#a00000" stroke-width="0.9" points="753.3,143.2 775.4,152.1 905.0,128.4"/><polygon fill="#18cc44" points="757.0,141.0 943.1,107.1 960.6,113.9 774.2,147.9"/><g fill="#00c8bb"><polygon points="779.8,148.3 959.4,115.5 959.4,112.5 779.8,145.3"/><polygon points="757.7,139.5 779.8,148.3 779.8,145.3 757.7,136.5"/><polygon points="757.7,136.5 937.0,103.9 959.4,112.5 779.8,145.3"/></g><polyline fill="none" stroke="#009c90" stroke-width="0.9" points="757.7,139.5 779.8,148.3 959.4,115.5"/><g fill="#d40000"><polygon points="915.0,123.6 959.4,115.5 959.4,112.5 915.0,120.6"/><polygon points="892.7,112.0 937.0,103.9 959.4,112.5 915.0,120.6"/></g><polyline fill="none" stroke="#a00000" stroke-width="0.9" points="915.0,123.6 959.4,115.5"/><polygon fill="#18cc44" points="761.4,137.2 938.2,105.1 955.7,111.8 778.7,144.1"/><g fill="#00c8bb"><polygon points="785.5,144.3 952.3,113.8 952.3,110.9 785.6,141.3"/><polygon points="763.4,135.5 785.5,144.3 785.6,141.3 763.4,132.5"/><polygon points="763.4,132.5 929.9,102.3 952.3,110.9 785.6,141.3"/></g><polyline fill="none" stroke="#009c90" stroke-width="0.9" points="763.4,135.5 785.5,144.3 952.3,113.8"/><g fill="#d40000"><polygon points="915.0,120.6 952.3,113.8 952.3,110.9 915.0,117.7"/><polygon points="892.7,109.0 929.9,102.3 952.3,110.9 915.0,117.7"/></g><polyline fill="none" stroke="#a00000" stroke-width="0.9" points="915.0,120.6 952.3,113.8"/><polygon fill="#18cc44" points="767.1,133.2 931.1,103.4 948.6,110.2 784.4,140.1"/><g fill="#00c8bb"><polygon points="791.3,140.3 942.9,112.6 942.9,109.6 791.3,137.3"/><polygon points="769.1,131.4 791.3,140.3 791.3,137.3 769.1,128.5"/><polygon points="769.1,128.5 920.5,101.0 942.9,109.6 791.3,137.3"/></g><polyline fill="none" stroke="#009c90" stroke-width="0.9" points="769.1,131.4 791.3,140.3 942.9,112.6"/><polygon fill="#18cc44" points="772.8,129.2 921.7,102.2 939.2,108.9 790.1,136.1"/><g fill="#00c8bb"><polygon points="798.6,135.9 933.5,111.4 933.5,108.4 798.6,133.0"/><polygon points="776.4,127.2 798.6,135.9 798.6,133.0 776.4,124.2"/><polygon points="776.4,124.2 911.1,99.8 933.5,108.4 798.6,133.0"/></g><polyline fill="none" stroke="#009c90" stroke-width="0.9" points="776.4,127.2 798.6,135.9 933.5,111.4"/><g fill="#d40000"><polygon points="798.6,135.9 933.5,111.4 933.5,108.4 798.6,133.0"/><polygon points="776.4,127.2 798.6,135.9 798.6,133.0 776.4,124.2"/><polygon points="776.4,124.2 911.1,99.8 933.5,108.4 798.6,133.0"/></g><polyline fill="none" stroke="#a00000" stroke-width="0.9" points="776.4,127.2 798.6,135.9 933.5,111.4"/><g fill="#d40000"><polygon points="915.0,114.7 933.5,111.4 933.5,108.4 915.0,111.8"/><polygon points="892.7,103.1 911.1,99.8 933.5,108.4 915.0,111.8"/></g><polyline fill="none" stroke="#a00000" stroke-width="0.9" points="915.0,114.7 933.5,111.4"/><polygon fill="#18cc44" points="780.1,124.9 912.3,100.9 929.8,107.7 797.4,131.8"/><g fill="#00c8bb"><polygon points="805.7,131.7 924.1,110.1 924.1,107.2 805.7,128.7"/><polygon points="783.5,122.9 805.7,131.7 805.7,128.7 783.5,119.9"/><polygon points="783.5,119.9 901.7,98.5 924.1,107.2 805.7,128.7"/></g><polyline fill="none" stroke="#009c90" stroke-width="0.9" points="783.5,122.9 805.7,131.7 924.1,110.1"/><g fill="#d40000"><polygon points="915.0,111.8 924.1,110.1 924.1,107.2 915.0,108.8"/><polygon points="892.7,100.2 901.7,98.5 924.1,107.2 915.0,108.8"/></g><polyline fill="none" stroke="#a00000" stroke-width="0.9" points="915.0,111.8 924.1,110.1"/><polygon fill="#18cc44" points="787.2,120.7 902.9,99.7 920.4,106.4 804.5,127.5"/><g fill="#00c8bb"><polygon points="812.6,127.4 914.6,108.9 914.7,105.9 812.6,124.5"/><polygon points="790.4,118.7 812.6,127.4 812.6,124.5 790.4,115.7"/><polygon points="790.4,115.7 892.3,97.3 914.7,105.9 812.6,124.5"/></g><polyline fill="none" stroke="#009c90" stroke-width="0.9" points="790.4,118.7 812.6,127.4 914.6,108.9"/><g fill="#d40000"><polygon points="812.6,127.4 914.6,108.9 914.7,105.9 812.6,124.5"/><polygon points="790.4,118.7 812.6,127.4 812.6,124.5 790.4,115.7"/><polygon points="790.4,115.7 892.3,97.3 914.7,105.9 812.6,124.5"/></g><polyline fill="none" stroke="#a00000" stroke-width="0.9" points="790.4,118.7 812.6,127.4 914.6,108.9"/><polygon fill="#18cc44" points="794.1,116.4 893.5,98.5 911.0,105.2 811.4,123.3"/><g fill="#00c8bb"><polygon points="823.6,122.5 905.2,107.6 905.2,104.7 823.6,119.5"/><polygon points="801.4,113.7 823.6,122.5 823.6,119.5 801.4,110.8"/><polygon points="801.4,110.8 882.9,96.0 905.2,104.7 823.6,119.5"/></g><polyline fill="none" stroke="#009c90" stroke-width="0.9" points="801.4,113.7 823.6,122.5 905.2,107.6"/><g fill="#d40000"><polygon points="823.6,122.5 905.2,107.6 905.2,104.7 823.6,119.5"/><polygon points="801.4,113.7 823.6,122.5 823.6,119.5 801.4,110.8"/><polygon points="801.4,110.8 882.9,96.0 905.2,104.7 823.6,119.5"/></g><polyline fill="none" stroke="#a00000" stroke-width="0.9" points="801.4,113.7 823.6,122.5 905.2,107.6"/><polygon fill="#18cc44" points="805.1,111.5 884.1,97.2 901.5,104.0 822.5,118.3"/><g fill="#00c8bb"><polygon points="845.5,115.5 895.7,106.4 895.8,103.4 845.5,112.5"/><polygon points="823.3,106.8 845.5,115.5 845.5,112.5 823.3,103.8"/><polygon points="823.3,103.8 873.5,94.8 895.8,103.4 845.5,112.5"/></g><polyline fill="none" stroke="#009c90" stroke-width="0.9" points="823.3,106.8 845.5,115.5 895.7,106.4"/><g fill="#e0b000"><polygon points="845.5,115.5 895.7,106.4 895.8,103.4 845.5,112.5"/><polygon points="823.3,106.8 845.5,115.5 845.5,112.5 823.3,103.8"/><polygon points="823.3,103.8 873.5,94.8 895.8,103.4 845.5,112.5"/></g><polyline fill="none" stroke="#a07800" stroke-width="0.9" points="823.3,106.8 845.5,115.5 895.7,106.4"/><polygon fill="#18cc44" points="827.0,104.6 874.6,96.0 892.0,102.7 844.4,111.3"/></g><polyline points="648.5,724.2 616.7,730.3 610.5,733.4 603.3,743.7 703.0,791.0 733.8,793.0 754.4,802.6 785.6,804.5 900.0,778.6 1112.5,730.0 1181.4,715.0 1195.0,705.5 1168.0,696.0 1179.5,687.0 1146.0,670.6" fill="none" stroke="#14d414" stroke-width="4.6" stroke-linejoin="round"/><polygon fill="#00c8bb" points="731.7,777.7 1126.2,689.2 1126.3,686.4 731.7,774.8"/><polygon fill="#00c8bb" points="646.9,735.8 731.7,777.7 731.7,774.8 646.9,733.0"/><polyline fill="none" stroke="rgba(0,0,0,0.22)" stroke-width="0.9" points="646.9,735.8 731.7,777.7 1126.2,689.2"/><polygon fill="#00c8bb" points="731.7,774.8 1126.3,686.4 1126.3,683.5 731.7,771.9"/><polygon fill="#00c8bb" points="646.9,733.0 731.7,774.8 731.7,771.9 646.8,730.1"/><polyline fill="none" stroke="rgba(0,0,0,0.22)" stroke-width="0.9" points="646.9,733.0 731.7,774.8 1126.3,686.4"/><polygon fill="#d40000" points="731.7,771.9 1126.3,683.5 1126.4,680.7 731.7,769.0"/><polygon fill="#18cc30" points="646.8,730.1 731.7,771.9 731.7,769.0 646.8,727.2"/><polyline fill="none" stroke="rgba(0,0,0,0.22)" stroke-width="0.9" points="646.8,730.1 731.7,771.9 1126.3,683.5"/><polygon fill="#d40000" points="731.7,769.0 1126.4,680.7 1126.4,677.8 731.7,766.1"/><polygon fill="#18cc30" points="646.8,727.2 731.7,769.0 731.7,766.1 646.8,724.3"/><polyline fill="none" stroke="rgba(0,0,0,0.22)" stroke-width="0.9" points="646.8,727.2 731.7,769.0 1126.4,680.7"/><polygon fill="#18cc30" points="731.7,766.1 1126.4,677.8 1126.4,675.0 731.7,763.1"/><polygon fill="#18cc30" points="646.8,724.3 731.7,766.1 731.7,763.1 646.8,721.4"/><polyline fill="none" stroke="rgba(0,0,0,0.22)" stroke-width="0.9" points="646.8,724.3 731.7,766.1 1126.4,677.8"/><polygon fill="#d40000" points="731.7,763.1 1126.4,675.0 1126.5,672.1 731.7,760.2"/><polygon fill="#18cc30" points="646.8,721.4 731.7,763.1 731.7,760.2 646.8,718.5"/><polyline fill="none" stroke="rgba(0,0,0,0.22)" stroke-width="0.9" points="646.8,721.4 731.7,763.1 1126.4,675.0"/><polygon fill="#d40000" points="731.7,760.2 1126.5,672.1 1126.5,669.3 731.6,757.3"/><polygon fill="#18cc30" points="646.8,718.5 731.7,760.2 731.6,757.3 646.8,715.6"/><polyline fill="none" stroke="rgba(0,0,0,0.22)" stroke-width="0.9" points="646.8,718.5 731.7,760.2 1126.5,672.1"/><polygon fill="#18cc30" points="731.6,757.3 1126.5,669.3 1126.5,666.4 731.6,754.4"/><polygon fill="#18cc30" points="646.8,715.6 731.6,757.3 731.6,754.4 646.8,712.7"/><polyline fill="none" stroke="rgba(0,0,0,0.22)" stroke-width="0.9" points="646.8,715.6 731.6,757.3 1126.5,669.3"/><polygon fill="#d40000" points="731.6,754.4 1126.5,666.4 1126.6,663.6 731.6,751.5"/><polygon fill="#d40000" points="646.8,712.7 731.6,754.4 731.6,751.5 646.8,709.9"/><polyline fill="none" stroke="rgba(0,0,0,0.22)" stroke-width="0.9" points="646.8,712.7 731.6,754.4 1126.5,666.4"/><polygon fill="#d40000" points="731.6,751.5 1126.6,663.6 1126.6,660.7 731.6,748.5"/><polygon fill="#d40000" points="646.8,709.9 731.6,751.5 731.6,748.5 646.8,707.0"/><polyline fill="none" stroke="rgba(0,0,0,0.22)" stroke-width="0.9" points="646.8,709.9 731.6,751.5 1126.6,663.6"/><polygon fill="#18cc30" points="731.6,748.5 1126.6,660.7 1126.6,657.9 731.6,745.6"/><polygon fill="#18cc30" points="646.8,707.0 731.6,748.5 731.6,745.6 646.8,704.1"/><polyline fill="none" stroke="rgba(0,0,0,0.22)" stroke-width="0.9" points="646.8,707.0 731.6,748.5 1126.6,660.7"/><polygon fill="#00c8bb" points="731.6,745.6 1126.6,657.9 1126.7,655.0 731.6,742.7"/><polygon fill="#00c8bb" points="646.8,704.1 731.6,745.6 731.6,742.7 646.8,701.2"/><polyline fill="none" stroke="rgba(0,0,0,0.22)" stroke-width="0.9" points="646.8,704.1 731.6,745.6 1126.6,657.9"/><polygon fill="#00c8bb" points="731.6,742.7 1126.7,655.0 1126.7,652.2 731.6,739.8"/><polygon fill="#00c8bb" points="646.8,701.2 731.6,742.7 731.6,739.8 646.7,698.3"/><polyline fill="none" stroke="rgba(0,0,0,0.22)" stroke-width="0.9" points="646.8,701.2 731.6,742.7 1126.7,655.0"/><polygon fill="#00c8bb" points="731.6,739.8 1126.7,652.2 1126.7,649.3 731.6,736.9"/><polygon fill="#00c8bb" points="646.7,698.3 731.6,739.8 731.6,736.9 646.7,695.4"/><polyline fill="none" stroke="rgba(0,0,0,0.22)" stroke-width="0.9" points="646.7,698.3 731.6,739.8 1126.7,652.2"/><polygon fill="#00c8bb" points="731.6,736.9 1126.7,649.3 1126.8,646.5 731.6,733.9"/><polygon fill="#00c8bb" points="646.7,695.4 731.6,736.9 731.6,733.9 646.7,692.5"/><polyline fill="none" stroke="rgba(0,0,0,0.22)" stroke-width="0.9" points="646.7,695.4 731.6,736.9 1126.7,649.3"/><polygon fill="#00c8bb" points="731.6,733.9 1126.8,646.5 1126.8,643.6 731.6,731.0"/><polygon fill="#00c8bb" points="646.7,692.5 731.6,733.9 731.6,731.0 646.7,689.6"/><polyline fill="none" stroke="rgba(0,0,0,0.22)" stroke-width="0.9" points="646.7,692.5 731.6,733.9 1126.8,646.5"/><polygon fill="#00c8bb" points="731.6,731.0 1126.8,643.6 1126.8,640.7 731.6,728.1"/><polygon fill="#00c8bb" points="646.7,689.6 731.6,731.0 731.6,728.1 646.7,686.7"/><polyline fill="none" stroke="rgba(0,0,0,0.22)" stroke-width="0.9" points="646.7,689.6 731.6,731.0 1126.8,643.6"/><polygon fill="#00c8bb" points="731.6,728.1 1126.8,640.7 1126.9,637.9 731.6,725.2"/><polygon fill="#00c8bb" points="646.7,686.7 731.6,728.1 731.6,725.2 646.7,683.8"/><polyline fill="none" stroke="rgba(0,0,0,0.22)" stroke-width="0.9" points="646.7,686.7 731.6,728.1 1126.8,640.7"/><polygon fill="#00c8bb" points="731.6,725.2 1126.9,637.9 1126.9,635.0 731.6,722.2"/><polygon fill="#00c8bb" points="646.7,683.8 731.6,725.2 731.6,722.2 646.7,680.9"/><polyline fill="none" stroke="rgba(0,0,0,0.22)" stroke-width="0.9" points="646.7,683.8 731.6,725.2 1126.9,637.9"/><polygon fill="#00c8bb" points="731.6,722.2 1126.9,635.0 1126.9,632.2 731.6,719.3"/><polygon fill="#00c8bb" points="646.7,680.9 731.6,722.2 731.6,719.3 646.7,678.0"/><polyline fill="none" stroke="rgba(0,0,0,0.22)" stroke-width="0.9" points="646.7,680.9 731.6,722.2 1126.9,635.0"/><polygon fill="#00c8bb" points="731.6,719.3 1126.9,632.2 1127.0,629.3 731.6,716.4"/><polygon fill="#00c8bb" points="646.7,678.0 731.6,719.3 731.6,716.4 646.7,675.1"/><polyline fill="none" stroke="rgba(0,0,0,0.22)" stroke-width="0.9" points="646.7,678.0 731.6,719.3 1126.9,632.2"/><polygon fill="#00c8bb" points="731.6,716.4 1127.0,629.3 1127.0,626.4 731.6,713.4"/><polygon fill="#00c8bb" points="646.7,675.1 731.6,716.4 731.6,713.4 646.7,672.2"/><polyline fill="none" stroke="rgba(0,0,0,0.22)" stroke-width="0.9" points="646.7,675.1 731.6,716.4 1127.0,629.3"/><polygon fill="#00c8bb" points="731.6,713.4 1127.0,626.4 1127.0,623.6 731.6,710.5"/><polygon fill="#00c8bb" points="646.7,672.2 731.6,713.4 731.6,710.5 646.7,669.4"/><polyline fill="none" stroke="rgba(0,0,0,0.22)" stroke-width="0.9" points="646.7,672.2 731.6,713.4 1127.0,626.4"/><polygon fill="#00c8bb" points="731.6,710.5 1127.0,623.6 1127.1,620.7 731.6,707.6"/><polygon fill="#00c8bb" points="646.7,669.4 731.6,710.5 731.6,707.6 646.6,666.5"/><polyline fill="none" stroke="rgba(0,0,0,0.22)" stroke-width="0.9" points="646.7,669.4 731.6,710.5 1127.0,623.6"/><polygon fill="#00c8bb" points="731.6,707.6 1127.1,620.7 1127.1,617.9 731.6,704.7"/><polygon fill="#00c8bb" points="646.6,666.5 731.6,707.6 731.6,704.7 646.6,663.6"/><polyline fill="none" stroke="rgba(0,0,0,0.22)" stroke-width="0.9" points="646.6,666.5 731.6,707.6 1127.1,620.7"/><polygon fill="#00c8bb" points="731.6,704.7 1127.1,617.9 1127.2,615.0 731.6,701.7"/><polygon fill="#00c8bb" points="646.6,663.6 731.6,704.7 731.6,701.7 646.6,660.7"/><polyline fill="none" stroke="rgba(0,0,0,0.22)" stroke-width="0.9" points="646.6,663.6 731.6,704.7 1127.1,617.9"/><polygon fill="#00c8bb" points="731.6,701.7 1127.2,615.0 1127.2,612.1 731.6,698.8"/><polygon fill="#00c8bb" points="646.6,660.7 731.6,701.7 731.6,698.8 646.6,657.8"/><polyline fill="none" stroke="rgba(0,0,0,0.22)" stroke-width="0.9" points="646.6,660.7 731.6,701.7 1127.2,615.0"/><polygon fill="#00c8bb" points="731.6,698.8 1127.2,612.1 1127.2,609.3 731.6,695.9"/><polygon fill="#00c8bb" points="646.6,657.8 731.6,698.8 731.6,695.9 646.6,654.9"/><polyline fill="none" stroke="rgba(0,0,0,0.22)" stroke-width="0.9" points="646.6,657.8 731.6,698.8 1127.2,612.1"/><polygon fill="#00c8bb" points="731.6,695.9 1127.2,609.3 1127.3,606.4 731.6,692.9"/><polygon fill="#00c8bb" points="646.6,654.9 731.6,695.9 731.6,692.9 646.6,652.0"/><polyline fill="none" stroke="rgba(0,0,0,0.22)" stroke-width="0.9" points="646.6,654.9 731.6,695.9 1127.2,609.3"/><polygon fill="#00c8bb" points="731.6,692.9 1127.3,606.4 1127.3,603.6 731.6,690.0"/><polygon fill="#00c8bb" points="646.6,652.0 731.6,692.9 731.6,690.0 646.6,649.1"/><polyline fill="none" stroke="rgba(0,0,0,0.22)" stroke-width="0.9" points="646.6,652.0 731.6,692.9 1127.3,606.4"/><polygon fill="#00c8bb" points="731.6,690.0 1127.3,603.6 1127.3,600.7 731.6,687.1"/><polygon fill="#00c8bb" points="646.6,649.1 731.6,690.0 731.6,687.1 646.6,646.2"/><polyline fill="none" stroke="rgba(0,0,0,0.22)" stroke-width="0.9" points="646.6,649.1 731.6,690.0 1127.3,603.6"/><polygon fill="#00c8bb" points="731.6,687.1 1127.3,600.7 1127.4,597.8 731.6,684.1"/><polygon fill="#00c8bb" points="646.6,646.2 731.6,687.1 731.6,684.1 646.6,643.3"/><polyline fill="none" stroke="rgba(0,0,0,0.22)" stroke-width="0.9" points="646.6,646.2 731.6,687.1 1127.3,600.7"/><polygon fill="#00c8bb" points="731.6,684.1 1127.4,597.8 1127.4,595.0 731.6,681.2"/><polygon fill="#00c8bb" points="646.6,643.3 731.6,684.1 731.6,681.2 646.6,640.4"/><polyline fill="none" stroke="rgba(0,0,0,0.22)" stroke-width="0.9" points="646.6,643.3 731.6,684.1 1127.4,597.8"/><polygon fill="#00c8bb" points="731.6,681.2 1127.4,595.0 1127.4,592.1 731.6,678.3"/><polygon fill="#00c8bb" points="646.6,640.4 731.6,681.2 731.6,678.3 646.5,637.5"/><polyline fill="none" stroke="rgba(0,0,0,0.22)" stroke-width="0.9" points="646.6,640.4 731.6,681.2 1127.4,595.0"/><polygon fill="#00c8bb" points="731.6,678.3 1127.4,592.1 1127.5,589.2 731.6,675.3"/><polygon fill="#00c8bb" points="646.5,637.5 731.6,678.3 731.6,675.3 646.5,634.6"/><polyline fill="none" stroke="rgba(0,0,0,0.22)" stroke-width="0.9" points="646.5,637.5 731.6,678.3 1127.4,592.1"/><polygon fill="#18cc30" points="731.6,675.3 1127.5,589.2 1127.5,586.4 731.6,672.4"/><polygon fill="#18cc30" points="646.5,634.6 731.6,675.3 731.6,672.4 646.5,631.6"/><polyline fill="none" stroke="rgba(0,0,0,0.22)" stroke-width="0.9" points="646.5,634.6 731.6,675.3 1127.5,589.2"/><polygon fill="#18cc30" points="731.6,672.4 1127.5,586.4 1127.5,583.5 731.6,669.5"/><polygon fill="#18cc30" points="646.5,631.6 731.6,672.4 731.6,669.5 646.5,628.7"/><polyline fill="none" stroke="rgba(0,0,0,0.22)" stroke-width="0.9" points="646.5,631.6 731.6,672.4 1127.5,586.4"/><polygon fill="#18cc30" points="731.6,669.5 1127.5,583.5 1127.6,580.6 731.6,666.5"/><polygon fill="#18cc30" points="646.5,628.7 731.6,669.5 731.6,666.5 646.5,625.8"/><polyline fill="none" stroke="rgba(0,0,0,0.22)" stroke-width="0.9" points="646.5,628.7 731.6,669.5 1127.5,583.5"/><polygon fill="#18cc30" points="731.6,666.5 1127.6,580.6 1127.6,577.8 731.6,663.6"/><polygon fill="#18cc30" points="646.5,625.8 731.6,666.5 731.6,663.6 646.5,622.9"/><polyline fill="none" stroke="rgba(0,0,0,0.22)" stroke-width="0.9" points="646.5,625.8 731.6,666.5 1127.6,580.6"/><polygon fill="#00c8bb" points="731.6,663.6 1127.6,577.8 1127.6,574.9 731.6,660.6"/><polygon fill="#00c8bb" points="646.5,622.9 731.6,663.6 731.6,660.6 646.5,620.0"/><polyline fill="none" stroke="rgba(0,0,0,0.22)" stroke-width="0.9" points="646.5,622.9 731.6,663.6 1127.6,577.8"/><polygon fill="#00c8bb" points="731.6,660.6 1127.6,574.9 1127.7,572.0 731.6,657.7"/><polygon fill="#00c8bb" points="646.5,620.0 731.6,660.6 731.6,657.7 646.5,617.1"/><polyline fill="none" stroke="rgba(0,0,0,0.22)" stroke-width="0.9" points="646.5,620.0 731.6,660.6 1127.6,574.9"/><polygon fill="#00c8bb" points="731.6,657.7 1127.7,572.0 1127.7,569.2 731.6,654.8"/><polygon fill="#00c8bb" points="646.5,617.1 731.6,657.7 731.6,654.8 646.5,614.2"/><polyline fill="none" stroke="rgba(0,0,0,0.22)" stroke-width="0.9" points="646.5,617.1 731.6,657.7 1127.7,572.0"/><polygon fill="#18cc30" points="731.6,654.8 1127.7,569.2 1127.8,566.3 731.6,651.8"/><polygon fill="#18cc30" points="646.5,614.2 731.6,654.8 731.6,651.8 646.5,611.3"/><polyline fill="none" stroke="rgba(0,0,0,0.22)" stroke-width="0.9" points="646.5,614.2 731.6,654.8 1127.7,569.2"/><polygon fill="#18cc30" points="731.6,651.8 1127.8,566.3 1127.8,563.4 731.6,648.9"/><polygon fill="#18cc30" points="646.5,611.3 731.6,651.8 731.6,648.9 646.5,608.4"/><polyline fill="none" stroke="rgba(0,0,0,0.22)" stroke-width="0.9" points="646.5,611.3 731.6,651.8 1127.8,566.3"/><polygon fill="#d40000" points="731.6,648.9 1127.8,563.4 1127.8,560.5 731.6,645.9"/><polygon fill="#d40000" points="646.5,608.4 731.6,648.9 731.6,645.9 646.4,605.5"/><polyline fill="none" stroke="rgba(0,0,0,0.22)" stroke-width="0.9" points="646.5,608.4 731.6,648.9 1127.8,563.4"/><polygon fill="#18cc30" points="731.6,645.9 1127.8,560.5 1127.9,557.7 731.6,643.0"/><polygon fill="#18cc30" points="646.4,605.5 731.6,645.9 731.6,643.0 646.4,602.6"/><polyline fill="none" stroke="rgba(0,0,0,0.22)" stroke-width="0.9" points="646.4,605.5 731.6,645.9 1127.8,560.5"/><polygon fill="#18cc30" points="731.6,643.0 1127.9,557.7 1127.9,554.8 731.6,640.1"/><polygon fill="#18cc30" points="646.4,602.6 731.6,643.0 731.6,640.1 646.4,599.7"/><polyline fill="none" stroke="rgba(0,0,0,0.22)" stroke-width="0.9" points="646.4,602.6 731.6,643.0 1127.9,557.7"/><polygon fill="#18cc30" points="731.6,640.1 1127.9,554.8 1127.9,551.9 731.6,637.1"/><polygon fill="#18cc30" points="646.4,599.7 731.6,640.1 731.6,637.1 646.4,596.8"/><polyline fill="none" stroke="rgba(0,0,0,0.22)" stroke-width="0.9" points="646.4,599.7 731.6,640.1 1127.9,554.8"/><polygon points="668.0,608.2 1062.4,524.5 1127.9,553.1 731.6,638.3" fill="#d8c800" /><polygon points="677.2,608.3 1059.7,527.1 1118.5,552.8 734.3,635.3" fill="#d8a000" /><polygon points="1057.6,525.5 1062.4,524.5 1127.9,553.1 1123.0,554.1" fill="#d40000" /><polygon points="760.0,745.5 779.0,749.5 779.0,787.0 760.0,782.5" fill="#d49800" /><polygon points="760.0,745.5 779.0,749.5 779.0,787.0 760.0,782.5" fill="url(#pu)"/><polygon points="760.0,779.5 779.0,775.2 779.0,778.4 760.0,782.7" fill="#18cc30" /><polygon points="779.0,751.8 1146.0,669.8 1146.0,707.0 779.0,789.9" fill="#d49800" /><polygon points="779.0,751.8 1146.0,669.8 1146.0,707.0 779.0,789.9" fill="url(#pu)"/><polygon points="779.0,786.6 1146.0,703.8 1146.0,707.1 779.0,790.0" fill="#18cc30" /><polygon points="818.0,743.1 1146.0,669.8 1146.0,687.5 818.0,760.6" fill="#18cc30" /><polygon points="818.0,743.1 1146.0,669.8 1146.0,687.5 818.0,760.6" fill="url(#pu)"/><polygon points="836.0,716.0 1058.0,667.0 1108.0,652.0 1108.0,684.5 836.0,743.2" fill="#d6bc00" /><polygon points="836.0,741.0 1108.0,681.5 1108.0,684.5 836.0,744.0" fill="#9cc800" /><polygon points="1017.0,675.7 1058.0,667.0 1090.0,660.0 1090.0,662.5 1017.0,678.5" fill="#d40000" /><polygon points="836.0,680.0 1057.0,632.5 1058.0,667.0 836.0,716.0" fill="#d49800" /><polygon points="836.0,714.2 1058.0,665.2 1058.0,668.0 836.0,717.2" fill="#18cc30" /><polygon points="836.0,685.5 1057.0,637.5 1057.0,640.0 836.0,688.0" fill="#18cc30" /><polygon points="836.0,679.0 1057.0,631.5 1057.0,634.5 836.0,682.0" fill="#9cc800" /><polygon points="826.0,666.0 1108.3,605.0 1108.3,615.0 826.0,676.0" fill="#18cc30" /><polygon points="826.0,666.0 1108.3,605.0 1108.3,615.0 826.0,676.0" fill="url(#pu)"/><polygon points="826.0,666.0 982.0,632.5 982.0,642.0 826.0,676.0" fill="#d40000" /><polygon points="982.0,631.0 1057.0,615.5 1057.0,619.0 982.0,634.5" fill="#d01010" /><polygon points="792.0,651.7 1060.4,593.0 1108.3,605.0 826.0,666.0" fill="#b4e000" /><polygon points="801.0,652.5 1061.0,596.5 1094.0,606.5 826.0,661.5" fill="#a8b400" /><polygon points="801.0,652.5 1061.0,596.5 1094.0,606.5 826.0,661.5" fill="url(#ph)"/><polygon points="792.0,652.0 826.0,668.5 826.0,747.5 792.0,733.0" fill="#00c8bb" /><polygon points="792.0,652.0 826.0,668.5 826.0,747.5 792.0,733.0" fill="url(#pv)"/><polygon points="792.0,679.0 826.0,695.2 826.0,698.2 792.0,682.0" fill="#d40000" /><polygon points="792.0,686.0 826.0,702.2 826.0,705.2 792.0,689.0" fill="#d40000" /><polygon points="792.0,709.0 826.0,725.3 826.0,728.3 792.0,712.0" fill="#d40000" /><polygon points="792.0,716.0 826.0,732.4 826.0,735.4 792.0,719.0" fill="#d40000" /><polygon points="792.0,731.0 826.0,747.4 826.0,750.4 792.0,734.0" fill="#d40000" /><polygon points="826.0,671.5 836.0,669.5 836.0,744.0 826.0,746.5" fill="#00c8bb" /><polygon points="826.0,671.5 836.0,669.5 836.0,744.0 826.0,746.5" fill="url(#pu)"/><polygon points="826.0,742.0 836.0,740.0 836.0,744.0 826.0,746.5" fill="#d40000" /><polygon points="826.0,690.0 836.0,687.8 836.0,690.4 826.0,692.6" fill="#d40000" /><polygon points="826.0,697.0 836.0,694.8 836.0,697.4 826.0,699.6" fill="#d40000" /><polygon points="826.0,720.0 836.0,717.8 836.0,720.4 826.0,722.6" fill="#d40000" /><polygon points="826.0,727.0 836.0,724.8 836.0,727.4 826.0,729.6" fill="#d40000" /><polygon points="1056.3,623.0 1108.0,634.5 1108.0,685.0 1056.3,667.5" fill="#00c8bb" /><polygon points="1056.3,623.0 1108.0,634.5 1108.0,685.0 1056.3,667.5" fill="url(#pu)"/><polygon points="1076.0,619.5 1108.0,626.5 1108.0,629.0 1076.0,622.0" fill="#d40000" /><polygon points="1076.0,624.0 1108.0,631.0 1108.0,633.5 1076.0,626.5" fill="#d40000" /><polygon points="1076.0,628.5 1108.0,635.5 1108.0,638.0 1076.0,631.0" fill="#d40000" /><polygon points="1108.0,654.0 1146.0,646.0 1146.0,671.0 1108.0,680.0" fill="#18cc30" /><polygon points="1108.0,654.0 1146.0,646.0 1146.0,671.0 1108.0,680.0" fill="url(#pu)"/><polygon points="1108.9,621.7 1125.0,629.0 1148.7,628.0 1148.7,662.5 1130.0,665.5 1108.9,661.6" fill="#00c8bb" /><polygon points="1108.9,621.7 1125.0,629.0 1148.7,628.0 1148.7,662.5 1130.0,665.5 1108.9,661.6" fill="url(#pu)"/><polygon points="1147.0,627.5 1166.9,625.3 1166.9,658.0 1147.0,661.5" fill="#d40000" /><polygon points="1147.0,636.5 1167.0,632.1 1167.0,634.7 1147.0,639.1" fill="#00c8bb" /><polygon points="1147.0,649.0 1167.0,644.6 1167.0,647.2 1147.0,651.6" fill="#00c8bb" /><polygon points="1147.0,627.5 1166.9,625.3 1166.9,658.0 1147.0,661.5" fill="url(#pu)"/><polygon points="1108.9,621.7 1127.0,609.0 1160.0,621.5 1166.9,625.3 1148.7,628.5 1125.0,629.5" fill="#18cc30" /><polyline points="1127.0,609.0 1166.9,625.3" fill="none" stroke="#d40000" stroke-width="2"/><ellipse cx="1136" cy="619" rx="12" ry="4.5" fill="none" stroke="#0a9a30" stroke-width="1.1"/><ellipse cx="1136" cy="619" rx="6" ry="2.2" fill="none" stroke="#0a9a30" stroke-width="0.9"/><polygon points="729.7,693.4 766.4,710.8 766.4,745.5 729.7,728.5" fill="#00c8bb" /><polygon points="729.7,693.4 766.4,710.8 766.4,745.5 729.7,728.5" fill="url(#pv)"/><polygon points="766.4,710.8 788.0,707.0 791.5,702.0 796.5,708.0 796.5,741.0 790.0,746.0 766.4,745.5" fill="#00c8bb" /><polygon points="766.4,710.8 788.0,707.0 791.5,702.0 796.5,708.0 796.5,741.0 790.0,746.0 766.4,745.5" fill="url(#pu)"/><polygon points="784.0,707.5 796.5,704.7 796.5,708.0 784.0,710.8" fill="#d40000" /><polygon points="784.0,728.5 796.5,725.7 796.5,729.0 784.0,731.8" fill="#d40000" /><polygon points="784.0,736.0 796.5,733.2 796.5,736.5 784.0,739.3" fill="#d40000" /><polygon points="729.7,693.4 767.3,687.6 786.0,692.0 791.5,702.0 788.0,707.0 766.4,710.8" fill="#18cc30" /><polygon points="729.7,693.4 767.3,687.6 786.0,692.0 791.5,702.0 788.0,707.0 766.4,710.8" fill="none" stroke="#00c8bb" stroke-width="2" stroke-linejoin="round"/><polyline points="729.7,693.4 767.3,687.6" fill="none" stroke="#d40000" stroke-width="2.2"/><ellipse cx="762" cy="698" rx="13" ry="5" fill="none" stroke="#0a9a30" stroke-width="1.1"/><ellipse cx="762" cy="698" rx="6.5" ry="2.4" fill="none" stroke="#0a9a30" stroke-width="0.9"/><g clip-path="url(#hf)"><use href="#bg"/></g></svg><div class="t" style="left:7px;top:11px">Speed (mm/s)</div><div style="position:absolute;left:8px;top:28px;width:20px;height:18px;background:#c0272d;box-shadow:inset 0 0 0 1px rgba(0,0,0,0.08)"></div><div class="t" style="left:33px;top:32px">100.0</div><div style="position:absolute;left:8px;top:46px;width:20px;height:18px;background:#c0563a;box-shadow:inset 0 0 0 1px rgba(0,0,0,0.08)"></div><div class="t" style="left:33px;top:50px">91.0</div><div style="position:absolute;left:8px;top:64px;width:20px;height:18px;background:#bf8a30;box-shadow:inset 0 0 0 1px rgba(0,0,0,0.08)"></div><div class="t" style="left:33px;top:68px">82.0</div><div style="position:absolute;left:8px;top:82px;width:20px;height:18px;background:#b9bb33;box-shadow:inset 0 0 0 1px rgba(0,0,0,0.08)"></div><div class="t" style="left:33px;top:86px">73.0</div><div style="position:absolute;left:8px;top:100px;width:20px;height:18px;background:#86bb2f;box-shadow:inset 0 0 0 1px rgba(0,0,0,0.08)"></div><div class="t" style="left:33px;top:104px">64.0</div><div style="position:absolute;left:8px;top:118px;width:20px;height:18px;background:#4bb934;box-shadow:inset 0 0 0 1px rgba(0,0,0,0.08)"></div><div class="t" style="left:33px;top:122px">55.0</div><div style="position:absolute;left:8px;top:136px;width:20px;height:18px;background:#2fb83d;box-shadow:inset 0 0 0 1px rgba(0,0,0,0.08)"></div><div class="t" style="left:33px;top:140px">46.0</div><div style="position:absolute;left:8px;top:154px;width:20px;height:18px;background:#2fbd72;box-shadow:inset 0 0 0 1px rgba(0,0,0,0.08)"></div><div class="t" style="left:33px;top:158px">37.0</div><div style="position:absolute;left:8px;top:172px;width:20px;height:18px;background:#2fbfa8;box-shadow:inset 0 0 0 1px rgba(0,0,0,0.08)"></div><div class="t" style="left:33px;top:176px">28.0</div><div style="position:absolute;left:8px;top:190px;width:20px;height:18px;background:#2ea4c0;box-shadow:inset 0 0 0 1px rgba(0,0,0,0.08)"></div><div class="t" style="left:33px;top:194px">19.0</div><div style="position:absolute;left:8px;top:208px;width:20px;height:18px;background:#2c73c3;box-shadow:inset 0 0 0 1px rgba(0,0,0,0.08)"></div><div class="t" style="left:33px;top:212px">10.0</div><div class="t" style="left:774px;top:11px">Preview Mode</div><div class="t" style="left:7px;top:757px">Toolhead Position</div><div class="t" style="left:7px;top:775px">X: 0.000</div><div class="t" style="left:7px;top:793px">Y: 200.000</div><div class="t" style="left:7px;top:811px">Z: 51.060</div><div style="position:absolute;left:1481px;top:768px;width:129px;height:53px;border-radius:5px;background:rgba(50,50,50,0.9)"></div><div class="t" style="left:1490px;top:779px;color:#f4f4f4">Printing...</div><div style="position:absolute;left:1490px;top:800px;width:108px;height:9px;border:1.6px solid #dcdcdc;border-radius:1px"></div></body></html>
